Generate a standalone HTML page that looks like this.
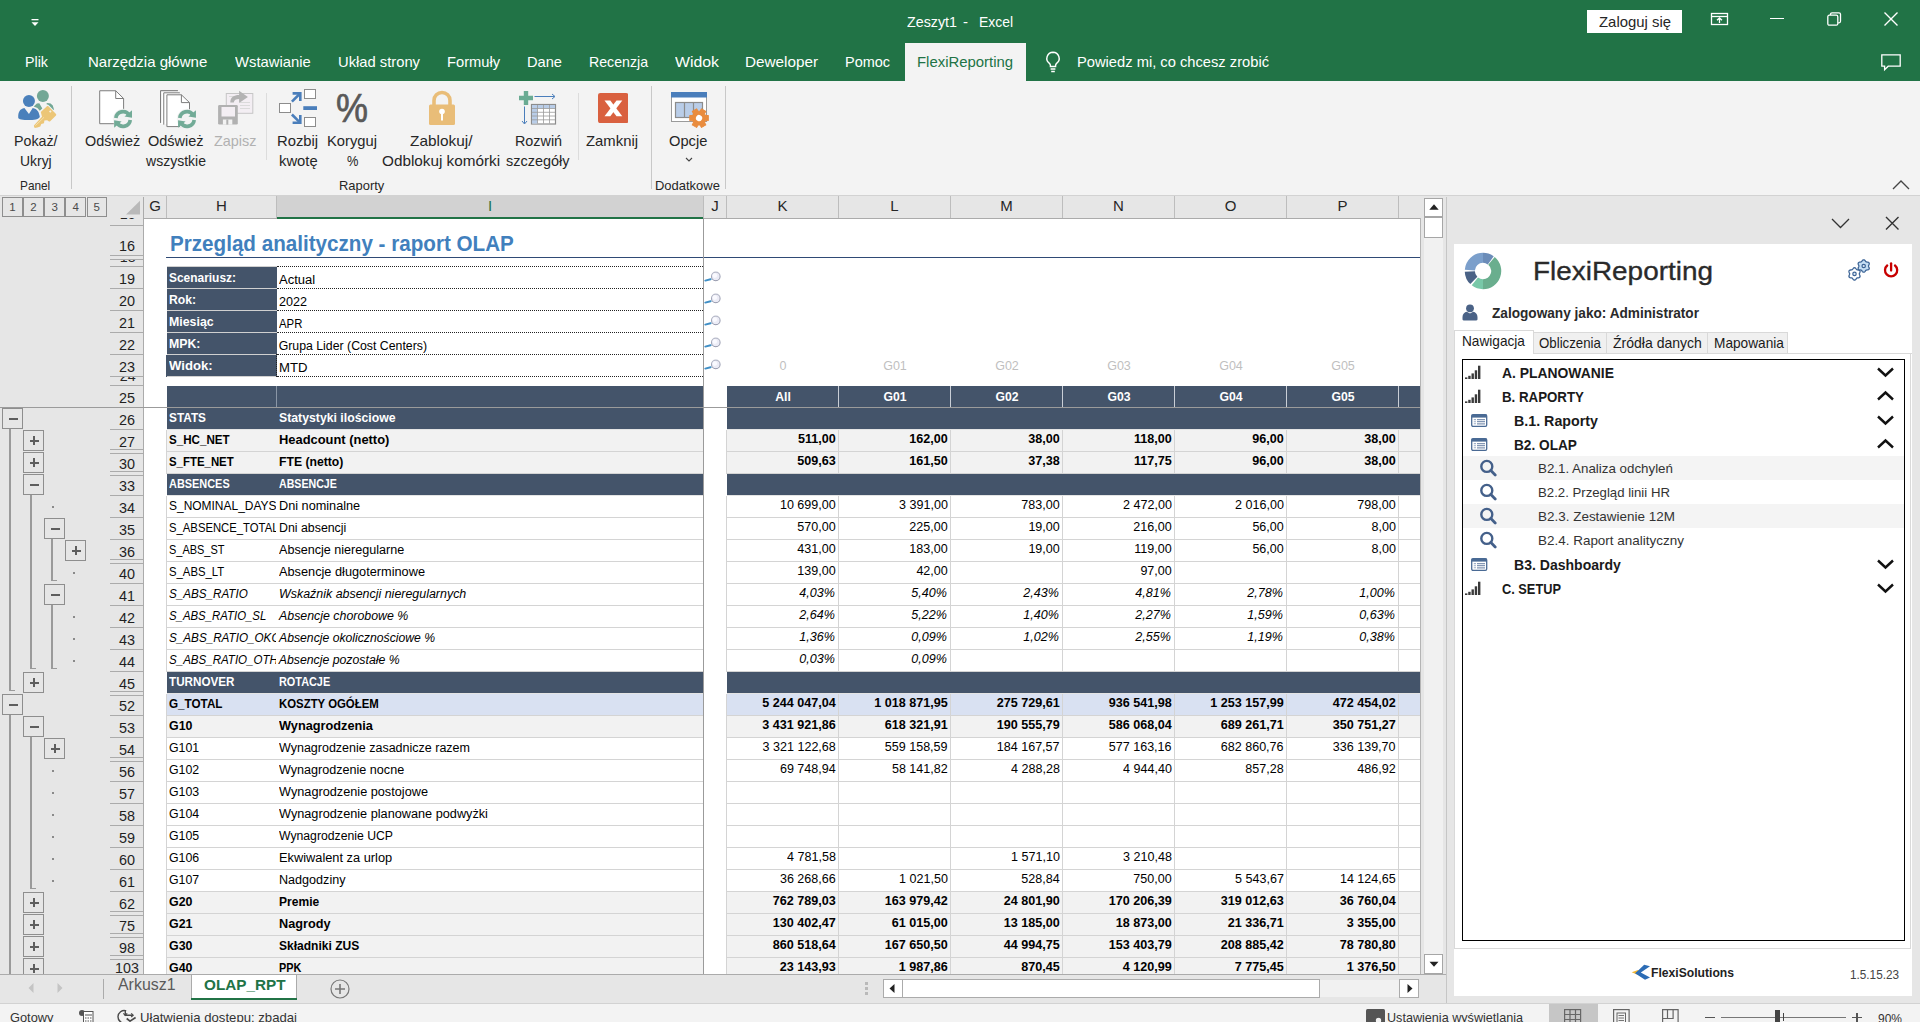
<!DOCTYPE html>
<html><head><meta charset="utf-8"><title>Zeszyt1 - Excel</title>
<style>
html,body{margin:0;padding:0;}
body{width:1920px;height:1022px;overflow:hidden;position:relative;background:#e6e6e6;font-family:"Liberation Sans",sans-serif;}
span{display:block}
</style></head><body>
<div style="position:absolute;left:0.00px;top:0.00px;width:1920.00px;height:81.00px;background:#217346;"></div>
<div style="position:absolute;left:0.00px;top:81.00px;width:1920.00px;height:114.00px;background:#f3f3f3;"></div>
<div style="position:absolute;left:0.00px;top:195.00px;width:1920.00px;height:1.00px;background:#d2d2d2;"></div>
<div style="position:absolute;left:0.00px;top:196.00px;width:1920.00px;height:826.00px;background:#e6e6e6;"></div>
<svg style="position:absolute;left:30.30px;top:17.60px" width="10" height="10" viewBox="0 0 10 10"><rect x="1.5" y="1" width="7" height="1.3" fill="#fff"/><path d="M1.5 4.2h7L5 8z" fill="#fff"/></svg>
<span style="position:absolute;top:12.30px;line-height:19px;font-size:15.00px;font-weight:normal;font-style:normal;color:#fff;white-space:pre;left:907.00px;transform-origin:0 50%;transform:scaleX(0.9521);">Zeszyt1</span>
<span style="position:absolute;top:12.30px;line-height:19px;font-size:15.00px;font-weight:normal;font-style:normal;color:#fff;white-space:pre;left:963.00px;transform-origin:0 50%;">-</span>
<span style="position:absolute;top:12.30px;line-height:19px;font-size:15.00px;font-weight:normal;font-style:normal;color:#fff;white-space:pre;left:979.00px;transform-origin:0 50%;transform:scaleX(0.9269);">Excel</span>
<div style="position:absolute;left:1587.00px;top:10.00px;width:95.00px;height:23.00px;background:#fff;"></div>
<span style="position:absolute;top:12.30px;line-height:19px;font-size:15.00px;font-weight:normal;font-style:normal;color:#262626;white-space:pre;left:1598.50px;transform-origin:0 50%;transform:scaleX(0.9926);">Zaloguj się</span>
<svg style="position:absolute;left:1710.00px;top:12.00px" width="20" height="14" viewBox="0 0 20 14"><rect x="1.5" y="1.5" width="16" height="11" fill="none" stroke="#fff" stroke-width="1.3"/><path d="M1.5 4.5h16" stroke="#fff" stroke-width="1.3"/><path d="M9.5 11V6.3M7 8.3l2.5-2.3 2.5 2.3" stroke="#fff" stroke-width="1.3" fill="none"/></svg>
<div style="position:absolute;left:1770.00px;top:18.00px;width:14.00px;height:1.30px;background:#fff;"></div>
<svg style="position:absolute;left:1826.00px;top:11.00px" width="16" height="16" viewBox="0 0 16 16"><rect x="1.8" y="4.2" width="10" height="10" rx="1.5" fill="none" stroke="#fff" stroke-width="1.3"/><path d="M4.5 4V3.3a1.5 1.5 0 0 1 1.5-1.5h7a1.5 1.5 0 0 1 1.5 1.5v7a1.5 1.5 0 0 1-1.5 1.5h-.9" fill="none" stroke="#fff" stroke-width="1.3"/></svg>
<svg style="position:absolute;left:1883.00px;top:11.00px" width="16" height="16" viewBox="0 0 16 16"><path d="M1.5 1.5l13 13M14.5 1.5l-13 13" stroke="#fff" stroke-width="1.4"/></svg>
<span style="position:absolute;top:52.30px;line-height:19px;font-size:15.00px;font-weight:normal;font-style:normal;color:#fff;white-space:pre;left:25.00px;transform-origin:0 50%;transform:scaleX(0.9516);">Plik</span>
<span style="position:absolute;top:52.30px;line-height:19px;font-size:15.00px;font-weight:normal;font-style:normal;color:#fff;white-space:pre;left:88.00px;transform-origin:0 50%;">Narzędzia główne</span>
<span style="position:absolute;top:52.30px;line-height:19px;font-size:15.00px;font-weight:normal;font-style:normal;color:#fff;white-space:pre;left:235.00px;transform-origin:0 50%;transform:scaleX(0.9871);">Wstawianie</span>
<span style="position:absolute;top:52.30px;line-height:19px;font-size:15.00px;font-weight:normal;font-style:normal;color:#fff;white-space:pre;left:338.00px;transform-origin:0 50%;transform:scaleX(0.9836);">Układ strony</span>
<span style="position:absolute;top:52.30px;line-height:19px;font-size:15.00px;font-weight:normal;font-style:normal;color:#fff;white-space:pre;left:447.00px;transform-origin:0 50%;transform:scaleX(0.9784);">Formuły</span>
<span style="position:absolute;top:52.30px;line-height:19px;font-size:15.00px;font-weight:normal;font-style:normal;color:#fff;white-space:pre;left:527.00px;transform-origin:0 50%;transform:scaleX(0.9760);">Dane</span>
<span style="position:absolute;top:52.30px;line-height:19px;font-size:15.00px;font-weight:normal;font-style:normal;color:#fff;white-space:pre;left:589.00px;transform-origin:0 50%;transform:scaleX(0.9435);">Recenzja</span>
<span style="position:absolute;top:52.30px;line-height:19px;font-size:15.00px;font-weight:normal;font-style:normal;color:#fff;white-space:pre;left:675.00px;transform-origin:0 50%;transform:scaleX(1.0558);">Widok</span>
<span style="position:absolute;top:52.30px;line-height:19px;font-size:15.00px;font-weight:normal;font-style:normal;color:#fff;white-space:pre;left:745.00px;transform-origin:0 50%;transform:scaleX(1.0181);">Deweloper</span>
<span style="position:absolute;top:52.30px;line-height:19px;font-size:15.00px;font-weight:normal;font-style:normal;color:#fff;white-space:pre;left:845.00px;transform-origin:0 50%;transform:scaleX(0.9639);">Pomoc</span>
<div style="position:absolute;left:905.00px;top:43.00px;width:121.00px;height:38.00px;background:#f3f3f3;"></div>
<span style="position:absolute;top:52.30px;line-height:19px;font-size:15.00px;font-weight:normal;font-style:normal;color:#217346;white-space:pre;left:917.00px;transform-origin:0 50%;transform:scaleX(0.9927);">FlexiReporting</span>
<svg style="position:absolute;left:1043.00px;top:50.00px" width="20" height="24" viewBox="0 0 20 24"><path d="M10 2.2a6.2 6.2 0 0 0-3.6 11.2c.7.6 1 1.3 1 2.1v1h5.2v-1c0-.8.3-1.5 1-2.1A6.2 6.2 0 0 0 10 2.2z" fill="none" stroke="#fff" stroke-width="1.4"/><path d="M7.6 19h4.8M8.2 21.5h3.6" stroke="#fff" stroke-width="1.4"/></svg>
<span style="position:absolute;top:52.30px;line-height:19px;font-size:15.00px;font-weight:normal;font-style:normal;color:#fff;white-space:pre;left:1077.00px;transform-origin:0 50%;transform:scaleX(0.9801);">Powiedz mi, co chcesz zrobić</span>
<svg style="position:absolute;left:1880.00px;top:53.00px" width="22" height="19" viewBox="0 0 22 19"><path d="M1.8 1.8h18.4v11.4H8.2l-3.6 3.6v-3.6H1.8z" fill="none" stroke="#fff" stroke-width="1.3"/></svg>
<div style="position:absolute;left:71.00px;top:86.00px;width:1.00px;height:103.00px;background:#c8c8c8;"></div>
<div style="position:absolute;left:651.00px;top:86.00px;width:1.00px;height:103.00px;background:#c8c8c8;"></div>
<div style="position:absolute;left:725.00px;top:86.00px;width:1.00px;height:103.00px;background:#c8c8c8;"></div>
<div style="position:absolute;left:266.00px;top:93.00px;width:1.00px;height:67.00px;background:#dcdcdc;"></div>
<div style="position:absolute;left:578.00px;top:93.00px;width:1.00px;height:67.00px;background:#dcdcdc;"></div>
<span style="position:absolute;top:131.30px;line-height:19px;font-size:15.00px;font-weight:normal;font-style:normal;color:#262626;white-space:pre;left:14.40px;transform-origin:0 50%;transform:scaleX(0.9486);">Pokaż/</span>
<span style="position:absolute;top:151.00px;line-height:19px;font-size:15.00px;font-weight:normal;font-style:normal;color:#262626;white-space:pre;left:19.60px;transform-origin:0 50%;transform:scaleX(0.9280);">Ukryj</span>
<span style="position:absolute;top:177.22px;line-height:17px;font-size:13.50px;font-weight:normal;font-style:normal;color:#262626;white-space:pre;left:19.60px;transform-origin:0 50%;transform:scaleX(0.8746);">Panel</span>
<span style="position:absolute;top:131.30px;line-height:19px;font-size:15.00px;font-weight:normal;font-style:normal;color:#262626;white-space:pre;left:84.50px;transform-origin:0 50%;transform:scaleX(0.9597);">Odśwież</span>
<span style="position:absolute;top:131.30px;line-height:19px;font-size:15.00px;font-weight:normal;font-style:normal;color:#262626;white-space:pre;left:148.40px;transform-origin:0 50%;transform:scaleX(0.9667);">Odśwież</span>
<span style="position:absolute;top:151.00px;line-height:19px;font-size:15.00px;font-weight:normal;font-style:normal;color:#262626;white-space:pre;left:145.50px;transform-origin:0 50%;transform:scaleX(0.9349);">wszystkie</span>
<span style="position:absolute;top:131.30px;line-height:19px;font-size:15.00px;font-weight:normal;font-style:normal;color:#b1b1b1;white-space:pre;left:213.50px;transform-origin:0 50%;transform:scaleX(0.9620);">Zapisz</span>
<span style="position:absolute;top:131.30px;line-height:19px;font-size:15.00px;font-weight:normal;font-style:normal;color:#262626;white-space:pre;left:277.30px;transform-origin:0 50%;transform:scaleX(0.9860);">Rozbij</span>
<span style="position:absolute;top:151.00px;line-height:19px;font-size:15.00px;font-weight:normal;font-style:normal;color:#262626;white-space:pre;left:278.70px;transform-origin:0 50%;transform:scaleX(0.9876);">kwotę</span>
<span style="position:absolute;top:131.30px;line-height:19px;font-size:15.00px;font-weight:normal;font-style:normal;color:#262626;white-space:pre;left:326.60px;transform-origin:0 50%;transform:scaleX(0.9811);">Koryguj</span>
<span style="position:absolute;top:151.00px;line-height:19px;font-size:15.00px;font-weight:normal;font-style:normal;color:#262626;white-space:pre;left:346.60px;transform-origin:0 50%;transform:scaleX(0.8547);">%</span>
<span style="position:absolute;top:131.30px;line-height:19px;font-size:15.00px;font-weight:normal;font-style:normal;color:#262626;white-space:pre;left:410.00px;transform-origin:0 50%;transform:scaleX(1.0252);">Zablokuj/</span>
<span style="position:absolute;top:151.00px;line-height:19px;font-size:15.00px;font-weight:normal;font-style:normal;color:#262626;white-space:pre;left:382.30px;transform-origin:0 50%;transform:scaleX(1.0192);">Odblokuj komórki</span>
<span style="position:absolute;top:131.30px;line-height:19px;font-size:15.00px;font-weight:normal;font-style:normal;color:#262626;white-space:pre;left:514.60px;transform-origin:0 50%;transform:scaleX(0.9577);">Rozwiń</span>
<span style="position:absolute;top:151.00px;line-height:19px;font-size:15.00px;font-weight:normal;font-style:normal;color:#262626;white-space:pre;left:506.30px;transform-origin:0 50%;transform:scaleX(0.9627);">szczegóły</span>
<span style="position:absolute;top:131.30px;line-height:19px;font-size:15.00px;font-weight:normal;font-style:normal;color:#262626;white-space:pre;left:586.20px;transform-origin:0 50%;transform:scaleX(0.9903);">Zamknij</span>
<span style="position:absolute;top:131.30px;line-height:19px;font-size:15.00px;font-weight:normal;font-style:normal;color:#262626;white-space:pre;left:669.20px;transform-origin:0 50%;transform:scaleX(0.9774);">Opcje</span>
<span style="position:absolute;top:177.22px;line-height:17px;font-size:13.50px;font-weight:normal;font-style:normal;color:#262626;white-space:pre;left:338.50px;transform-origin:0 50%;transform:scaleX(0.9583);">Raporty</span>
<span style="position:absolute;top:177.22px;line-height:17px;font-size:13.50px;font-weight:normal;font-style:normal;color:#262626;white-space:pre;left:655.40px;transform-origin:0 50%;transform:scaleX(0.9609);">Dodatkowe</span>
<svg style="position:absolute;left:684.00px;top:156.00px" width="10" height="7" viewBox="0 0 10 7"><path d="M2 2l3 3 3-3" fill="none" stroke="#444" stroke-width="1.1"/></svg>
<svg style="position:absolute;left:1891.00px;top:178.00px" width="20" height="13" viewBox="0 0 20 13"><path d="M2 11l8-8 8 8" fill="none" stroke="#444" stroke-width="1.3"/></svg>
<svg style="position:absolute;left:8.00px;top:84.00px" width="60" height="50" viewBox="0 0 60 50">
<circle cx="34.900" cy="11.900" r="6" fill="#72a795"/>
<path d="M25.700 22.600L28.900 19.600L31.300 19.300L34.300 24.500L31.800 26.700L29.400 24Z" fill="#72a795"/>
<path d="M38.200 20.100L39.200 19.100L42.600 19.600L44.800 21.500L46 25.500L45.500 25.900L40.600 21Z" fill="#72a795"/>
<circle cx="20.950" cy="16.900" r="6" fill="#4a80bb"/>
<path d="M10.200 33.500C10.200 28 11.500 25.200 16.400 24L20.950 29.900L24.700 24C29.500 25 31 28 31.800 32.500C31.800 35.500 25 36 20.950 36C15 36 10.200 35.500 10.200 33.500Z" fill="#4a80bb"/>
<path d="M39.200 22Q39.800 21.700 40.400 22.300L48 30Q48.500 30.800 48 31.400L42.200 37.300Q41.600 37.800 41 37.400L39.200 36.200L36.400 36.400L36 39.200L33.300 40.100L32.300 42.600L29.400 43.600L26.800 43.900Q25.900 43.500 25.900 41.600L34 32.800L32.800 28.100Z" fill="#ecc677"/>
<path d="M42.300 26.200l1.300 1.300-1.300 1.300-1.300-1.300z" fill="#f6f0e0"/>
<path d="M27.400 41.600L36 33.300" stroke="#f6e6bd" stroke-width=".8"/>
</svg>
<svg style="position:absolute;left:92.00px;top:84.00px" width="120" height="50" viewBox="0 0 120 50">
<path d="M7.700 6.750H23.700L31.600 14.500V39.700H7.700z" fill="#fff" stroke="#7d7d7d" stroke-width="1"/>
<path d="M23.700 6.750V14.500H31.600" fill="none" stroke="#7d7d7d" stroke-width="1"/>
<g transform="translate(31.06 35)"><circle r="10.300" fill="#f3f3f3"/>
<path d="M-7.200 -1A7.200 7.200 0 0 1 5.90 -4.13" fill="none" stroke="#72ab97" stroke-width="3.700"/>
<path d="M7.200 1A7.200 7.200 0 0 1 -5.90 4.13" fill="none" stroke="#72ab97" stroke-width="3.700"/>
<path d="M8.940 -8.750V-1.200L1.440 -2.500z" fill="#72ab97"/><path d="M-8.940 8.750V1.200L-1.440 2.500z" fill="#72ab97"/></g>
<path d="M68.600 38.750V6.750H85.900" fill="none" stroke="#7d7d7d" stroke-width="1"/>
<path d="M68.600 6.750H85.900V10H68.600z" fill="#fff" stroke="none"/>
<path d="M69.100 7.250H86.500V40H69.100z" fill="#fff"/>
<path d="M68.600 38.750V6.750H85.900" fill="none" stroke="#7d7d7d" stroke-width="1"/>
<path d="M71.750 40.600V8.800H87.800" fill="none" stroke="#7d7d7d" stroke-width="1"/>
<path d="M74.900 10.800H89.400L97.500 18.600V42.600H74.900z" fill="#fff" stroke="#7d7d7d" stroke-width="1"/>
<path d="M89.400 10.800V18.600H97.500" fill="none" stroke="#7d7d7d" stroke-width="1"/>
<g transform="translate(95 35)"><circle r="10.300" fill="#f3f3f3"/>
<path d="M-7.200 -1A7.200 7.200 0 0 1 5.90 -4.13" fill="none" stroke="#72ab97" stroke-width="3.700"/>
<path d="M7.200 1A7.200 7.200 0 0 1 -5.90 4.13" fill="none" stroke="#72ab97" stroke-width="3.700"/>
<path d="M8.940 -8.750V-1.200L1.440 -2.500z" fill="#72ab97"/><path d="M-8.940 8.750V1.200L-1.440 2.500z" fill="#72ab97"/></g></svg>
<svg style="position:absolute;left:210.00px;top:84.00px" width="50" height="46" viewBox="0 0 50 46"><rect x="16.300" y="9.500" width="26.500" height="19.800" fill="#f3eef3" stroke="#c6c6c6"/>
<path d="M30 18.500h10M30 21.500h10M30 24.500h10M19 12.500h8" stroke="#dadada" stroke-width="1"/>
<path d="M20.300 18.600C20.300 13 24 11 29.100 11V6.800L37.900 12.900L29.100 19V15C26 15 24 16 23.800 18.600z" fill="#b3b3b3"/>
<rect x="8.100" y="21" width="19.700" height="19.600" rx="1.300" fill="#b1b1b1"/><rect x="11.500" y="23" width="13.500" height="9.500" fill="#f3eef3"/>
<rect x="12.900" y="35.500" width="9.400" height="5.100" fill="#f3f3f3"/><rect x="16.300" y="35.500" width="2" height="5.100" fill="#b1b1b1"/></svg>
<svg style="position:absolute;left:277.00px;top:87.00px" width="42" height="42" viewBox="0 0 42 42"><rect x="2.500" y="16.500" width="11" height="9" fill="#fff" stroke="#8c8c8c"/>
<rect x="27.500" y="2.500" width="11" height="9" fill="#fff" stroke="#8c8c8c"/>
<rect x="27.500" y="30.500" width="11" height="9" fill="#fff" stroke="#8c8c8c"/>
<rect x="26.300" y="19.200" width="13.700" height="3.800" fill="#4a7ebb"/>
<path d="M14.900 14.600l7.700-7.600" stroke="#4a7ebb" stroke-width="2.600"/><path d="M15.600 6.400h7.700v7.700" fill="none" stroke="#4a7ebb" stroke-width="2.600"/>
<path d="M14.900 27.500l7.700 7.600" stroke="#4a7ebb" stroke-width="2.600"/><path d="M15.600 35.700h7.700v-7.700" fill="none" stroke="#4a7ebb" stroke-width="2.600"/></svg>
<span style="position:absolute;top:82.74px;line-height:50px;font-size:40.00px;font-weight:normal;font-style:normal;color:#595959;white-space:pre;left:51.70px;width:600px;text-align:center;transform-origin:50% 50%;transform:scaleX(0.8997);-webkit-text-stroke:0.7px #595959;">%</span>
<svg style="position:absolute;left:427.00px;top:89.00px" width="30" height="38" viewBox="0 0 30 38"><path d="M7 17v-5.500a8 8 0 0 1 16 0V17" fill="none" stroke="#e9bd78" stroke-width="3.600"/>
<rect x="2" y="15.500" width="26" height="20.500" rx="1.500" fill="#e9bd78"/>
<circle cx="15" cy="22.500" r="2.800" fill="#fff"/><rect x="14" y="23" width="2" height="8.500" fill="#fff"/></svg>
<svg style="position:absolute;left:517.00px;top:89.00px" width="42" height="38" viewBox="0 0 42 38"><path d="M9 2v14M2 9h14" stroke="#6aab93" stroke-width="4.400"/>
<path d="M17.500 7.500h20" stroke="#4a7ebb" stroke-width="1"/><path d="M35 5l3 2.500-3 2.500" fill="none" stroke="#4a7ebb"/>
<path d="M7.500 17.500v17" stroke="#4a7ebb" stroke-width="1"/><path d="M5 32l2.500 3 2.500-3" fill="none" stroke="#4a7ebb"/>
<rect x="14.500" y="15.500" width="24" height="19.500" fill="#fff" stroke="#8c8c8c" stroke-width="1.200"/>
<rect x="15" y="16" width="23" height="3.400" fill="#b9cde8"/><rect x="15" y="16" width="5.500" height="18.500" fill="#b9cde8"/>
<path d="M20.500 16v18.500M26.500 16v18.500M32.500 16v18.500M15 19.500h23M15 23.300h23M15 27h23M15 30.800h23" stroke="#9a9a9a" stroke-width=".8"/></svg>
<svg style="position:absolute;left:597.80px;top:92.80px" width="30.5" height="30.2" viewBox="0 0 30.5 30.2"><rect x="0" y="0" width="30.500" height="30.200" rx="2.500" fill="#d9603f"/><path d="M6.500 7.400h5.800l12 15.900h-5.800z" fill="#fff"/><path d="M24.300 7.400h-5.800l-12 15.900h5.800z" fill="#fff"/></svg>
<svg style="position:absolute;left:670.00px;top:91.00px" width="41" height="38" viewBox="0 0 41 38"><rect x="1.500" y="1.500" width="35" height="29" fill="#fff" stroke="#9a9a9a" stroke-width="1"/>
<rect x="1" y="1" width="36" height="5.500" fill="#4a7ebb"/>
<rect x="5.500" y="11.500" width="27" height="15" fill="#b9cde8" stroke="#8c8c8c" stroke-width="1.200"/>
<path d="M14.500 11.500v15M23.500 11.500v15" stroke="#8c8c8c" stroke-width="1.200"/>
<g transform="translate(29.05 27.1) rotate(30)"><path d="M-2.58 -6.40L-2.48 -9.27L2.48 -9.27L2.58 -6.40L4.25 -5.44L6.79 -6.79L9.27 -2.48L6.83 -0.96L6.83 0.96L9.27 2.48L6.79 6.79L4.25 5.44L2.58 6.40L2.48 9.27L-2.48 9.27L-2.58 6.40L-4.25 5.44L-6.79 6.79L-9.27 2.48L-6.83 0.96L-6.83 -0.96L-9.27 -2.48L-6.79 -6.79L-4.25 -5.44Z" fill="#e98c3e" stroke="#e98c3e" stroke-width="1" stroke-linejoin="round" style="paint-order:stroke"/><circle r="3.100" fill="#fff"/></g></svg>
<div style="position:absolute;left:144.00px;top:219.00px;width:1277.00px;height:755.00px;background:#fff;"></div>
<div style="position:absolute;left:2.30px;top:196.50px;width:20.40px;height:20.30px;background:#e6e6e6;border:1px solid #8e8e8e;box-sizing:border-box;"></div>
<span style="position:absolute;top:200.02px;line-height:14px;font-size:11.50px;font-weight:normal;font-style:normal;color:#4a4a4a;white-space:pre;left:-287.50px;width:600px;text-align:center;transform-origin:50% 50%;">1</span>
<div style="position:absolute;left:23.35px;top:196.50px;width:20.40px;height:20.30px;background:#e6e6e6;border:1px solid #8e8e8e;box-sizing:border-box;"></div>
<span style="position:absolute;top:200.02px;line-height:14px;font-size:11.50px;font-weight:normal;font-style:normal;color:#4a4a4a;white-space:pre;left:-266.45px;width:600px;text-align:center;transform-origin:50% 50%;">2</span>
<div style="position:absolute;left:44.40px;top:196.50px;width:20.40px;height:20.30px;background:#e6e6e6;border:1px solid #8e8e8e;box-sizing:border-box;"></div>
<span style="position:absolute;top:200.02px;line-height:14px;font-size:11.50px;font-weight:normal;font-style:normal;color:#4a4a4a;white-space:pre;left:-245.40px;width:600px;text-align:center;transform-origin:50% 50%;">3</span>
<div style="position:absolute;left:65.45px;top:196.50px;width:20.40px;height:20.30px;background:#e6e6e6;border:1px solid #8e8e8e;box-sizing:border-box;"></div>
<span style="position:absolute;top:200.02px;line-height:14px;font-size:11.50px;font-weight:normal;font-style:normal;color:#4a4a4a;white-space:pre;left:-224.35px;width:600px;text-align:center;transform-origin:50% 50%;">4</span>
<div style="position:absolute;left:86.50px;top:196.50px;width:20.40px;height:20.30px;background:#e6e6e6;border:1px solid #8e8e8e;box-sizing:border-box;"></div>
<span style="position:absolute;top:200.02px;line-height:14px;font-size:11.50px;font-weight:normal;font-style:normal;color:#4a4a4a;white-space:pre;left:-203.30px;width:600px;text-align:center;transform-origin:50% 50%;">5</span>
<svg style="position:absolute;left:125.00px;top:200.00px" width="16" height="15" viewBox="0 0 16 15"><path d="M15 .8V14.500H1z" fill="#b9b9b9"/></svg>
<div style="position:absolute;left:144.00px;top:218.00px;width:1277.00px;height:1.00px;background:#ababab;"></div>
<div style="position:absolute;left:166.00px;top:196.00px;width:1.00px;height:22.00px;background:#bdbdbd;"></div>
<span style="position:absolute;top:196.10px;line-height:19px;font-size:15.00px;font-weight:normal;font-style:normal;color:#262626;white-space:pre;left:-145.00px;width:600px;text-align:center;transform-origin:50% 50%;">G</span>
<div style="position:absolute;left:276.00px;top:196.00px;width:1.00px;height:22.00px;background:#bdbdbd;"></div>
<span style="position:absolute;top:196.10px;line-height:19px;font-size:15.00px;font-weight:normal;font-style:normal;color:#262626;white-space:pre;left:-78.50px;width:600px;text-align:center;transform-origin:50% 50%;">H</span>
<div style="position:absolute;left:277.00px;top:196.00px;width:426.00px;height:21.00px;background:#d2d2d2;"></div>
<div style="position:absolute;left:277.00px;top:217.00px;width:426.00px;height:2.00px;background:#217346;"></div>
<div style="position:absolute;left:703.00px;top:196.00px;width:1.00px;height:22.00px;background:#bdbdbd;"></div>
<span style="position:absolute;top:196.10px;line-height:19px;font-size:15.00px;font-weight:normal;font-style:normal;color:#217346;white-space:pre;left:190.00px;width:600px;text-align:center;transform-origin:50% 50%;">I</span>
<div style="position:absolute;left:726.00px;top:196.00px;width:1.00px;height:22.00px;background:#bdbdbd;"></div>
<span style="position:absolute;top:196.10px;line-height:19px;font-size:15.00px;font-weight:normal;font-style:normal;color:#262626;white-space:pre;left:415.00px;width:600px;text-align:center;transform-origin:50% 50%;">J</span>
<div style="position:absolute;left:838.00px;top:196.00px;width:1.00px;height:22.00px;background:#bdbdbd;"></div>
<span style="position:absolute;top:196.10px;line-height:19px;font-size:15.00px;font-weight:normal;font-style:normal;color:#262626;white-space:pre;left:482.50px;width:600px;text-align:center;transform-origin:50% 50%;">K</span>
<div style="position:absolute;left:950.00px;top:196.00px;width:1.00px;height:22.00px;background:#bdbdbd;"></div>
<span style="position:absolute;top:196.10px;line-height:19px;font-size:15.00px;font-weight:normal;font-style:normal;color:#262626;white-space:pre;left:594.50px;width:600px;text-align:center;transform-origin:50% 50%;">L</span>
<div style="position:absolute;left:1062.00px;top:196.00px;width:1.00px;height:22.00px;background:#bdbdbd;"></div>
<span style="position:absolute;top:196.10px;line-height:19px;font-size:15.00px;font-weight:normal;font-style:normal;color:#262626;white-space:pre;left:706.50px;width:600px;text-align:center;transform-origin:50% 50%;">M</span>
<div style="position:absolute;left:1174.00px;top:196.00px;width:1.00px;height:22.00px;background:#bdbdbd;"></div>
<span style="position:absolute;top:196.10px;line-height:19px;font-size:15.00px;font-weight:normal;font-style:normal;color:#262626;white-space:pre;left:818.50px;width:600px;text-align:center;transform-origin:50% 50%;">N</span>
<div style="position:absolute;left:1286.00px;top:196.00px;width:1.00px;height:22.00px;background:#bdbdbd;"></div>
<span style="position:absolute;top:196.10px;line-height:19px;font-size:15.00px;font-weight:normal;font-style:normal;color:#262626;white-space:pre;left:930.50px;width:600px;text-align:center;transform-origin:50% 50%;">O</span>
<div style="position:absolute;left:1398.00px;top:196.00px;width:1.00px;height:22.00px;background:#bdbdbd;"></div>
<span style="position:absolute;top:196.10px;line-height:19px;font-size:15.00px;font-weight:normal;font-style:normal;color:#262626;white-space:pre;left:1042.50px;width:600px;text-align:center;transform-origin:50% 50%;">P</span>
<div style="position:absolute;left:143.00px;top:197.00px;width:1.00px;height:777.00px;background:#ababab;"></div>
<div style="position:absolute;left:110.00px;top:225.00px;width:33.00px;height:1.00px;background:#ababab;"></div>
<div style="position:absolute;left:110.00px;top:255.00px;width:33.00px;height:1.00px;background:#ababab;"></div>
<div style="position:absolute;left:110.00px;top:259.00px;width:33.00px;height:1.00px;background:#ababab;"></div>
<div style="position:absolute;left:110.00px;top:266.00px;width:33.00px;height:1.00px;background:#ababab;"></div>
<div style="position:absolute;left:110.00px;top:376.00px;width:33.00px;height:1.00px;background:#ababab;"></div>
<div style="position:absolute;left:110.00px;top:385.00px;width:33.00px;height:1.00px;background:#ababab;"></div>
<span style="position:absolute;top:236.23px;line-height:19px;font-size:15.20px;font-weight:normal;font-style:normal;color:#1f1f1f;white-space:pre;left:-173.10px;width:600px;text-align:center;transform-origin:50% 50%;transform:scaleX(0.9474);">16</span>
<div style="position:absolute;left:110px;top:218px;width:33px;height:7px;overflow:hidden"><span style="position:absolute;right:7px;top:-14.5px;font-size:15px;line-height:19px;color:#262626;transform:scaleX(.95);transform-origin:100% 50%">15</span></div>
<div style="position:absolute;left:110px;top:260px;width:33px;height:6px;overflow:hidden"><span style="position:absolute;right:7px;top:-13.3px;font-size:15px;line-height:19px;color:#262626;transform:scaleX(.95);transform-origin:100% 50%">18</span></div>
<div style="position:absolute;left:110px;top:377px;width:33px;height:8px;overflow:hidden"><span style="position:absolute;right:7px;top:-11.3px;font-size:15px;line-height:19px;color:#262626;transform:scaleX(.95);transform-origin:100% 50%">24</span></div>
<div style="position:absolute;left:110.00px;top:288.00px;width:33.00px;height:1.00px;background:#ababab;"></div>
<span style="position:absolute;top:269.03px;line-height:19px;font-size:15.20px;font-weight:normal;font-style:normal;color:#1f1f1f;white-space:pre;left:-173.10px;width:600px;text-align:center;transform-origin:50% 50%;transform:scaleX(0.9474);">19</span>
<div style="position:absolute;left:110.00px;top:310.00px;width:33.00px;height:1.00px;background:#ababab;"></div>
<span style="position:absolute;top:291.03px;line-height:19px;font-size:15.20px;font-weight:normal;font-style:normal;color:#1f1f1f;white-space:pre;left:-173.10px;width:600px;text-align:center;transform-origin:50% 50%;transform:scaleX(0.9474);">20</span>
<div style="position:absolute;left:110.00px;top:332.00px;width:33.00px;height:1.00px;background:#ababab;"></div>
<span style="position:absolute;top:313.03px;line-height:19px;font-size:15.20px;font-weight:normal;font-style:normal;color:#1f1f1f;white-space:pre;left:-173.10px;width:600px;text-align:center;transform-origin:50% 50%;transform:scaleX(0.9474);">21</span>
<div style="position:absolute;left:110.00px;top:354.00px;width:33.00px;height:1.00px;background:#ababab;"></div>
<span style="position:absolute;top:335.03px;line-height:19px;font-size:15.20px;font-weight:normal;font-style:normal;color:#1f1f1f;white-space:pre;left:-173.10px;width:600px;text-align:center;transform-origin:50% 50%;transform:scaleX(0.9474);">22</span>
<div style="position:absolute;left:110.00px;top:376.00px;width:33.00px;height:1.00px;background:#ababab;"></div>
<span style="position:absolute;top:357.03px;line-height:19px;font-size:15.20px;font-weight:normal;font-style:normal;color:#1f1f1f;white-space:pre;left:-173.10px;width:600px;text-align:center;transform-origin:50% 50%;transform:scaleX(0.9474);">23</span>
<div style="position:absolute;left:110.00px;top:407.00px;width:33.00px;height:1.00px;background:#ababab;"></div>
<span style="position:absolute;top:388.03px;line-height:19px;font-size:15.20px;font-weight:normal;font-style:normal;color:#1f1f1f;white-space:pre;left:-173.10px;width:600px;text-align:center;transform-origin:50% 50%;transform:scaleX(0.9474);">25</span>
<div style="position:absolute;left:110.00px;top:429.00px;width:33.00px;height:1.00px;background:#ababab;"></div>
<span style="position:absolute;top:410.03px;line-height:19px;font-size:15.20px;font-weight:normal;font-style:normal;color:#1f1f1f;white-space:pre;left:-173.10px;width:600px;text-align:center;transform-origin:50% 50%;transform:scaleX(0.9474);">26</span>
<div style="position:absolute;left:110.00px;top:449.00px;width:33.00px;height:1.00px;background:#ababab;"></div>
<div style="position:absolute;left:110.00px;top:453.00px;width:33.00px;height:1.00px;background:#ababab;"></div>
<span style="position:absolute;top:432.03px;line-height:19px;font-size:15.20px;font-weight:normal;font-style:normal;color:#1f1f1f;white-space:pre;left:-173.10px;width:600px;text-align:center;transform-origin:50% 50%;transform:scaleX(0.9474);">27</span>
<div style="position:absolute;left:110.00px;top:471.00px;width:33.00px;height:1.00px;background:#ababab;"></div>
<div style="position:absolute;left:110.00px;top:475.00px;width:33.00px;height:1.00px;background:#ababab;"></div>
<span style="position:absolute;top:454.03px;line-height:19px;font-size:15.20px;font-weight:normal;font-style:normal;color:#1f1f1f;white-space:pre;left:-173.10px;width:600px;text-align:center;transform-origin:50% 50%;transform:scaleX(0.9474);">30</span>
<div style="position:absolute;left:110.00px;top:495.00px;width:33.00px;height:1.00px;background:#ababab;"></div>
<span style="position:absolute;top:476.03px;line-height:19px;font-size:15.20px;font-weight:normal;font-style:normal;color:#1f1f1f;white-space:pre;left:-173.10px;width:600px;text-align:center;transform-origin:50% 50%;transform:scaleX(0.9474);">33</span>
<div style="position:absolute;left:110.00px;top:517.00px;width:33.00px;height:1.00px;background:#ababab;"></div>
<span style="position:absolute;top:498.03px;line-height:19px;font-size:15.20px;font-weight:normal;font-style:normal;color:#1f1f1f;white-space:pre;left:-173.10px;width:600px;text-align:center;transform-origin:50% 50%;transform:scaleX(0.9474);">34</span>
<div style="position:absolute;left:110.00px;top:539.00px;width:33.00px;height:1.00px;background:#ababab;"></div>
<span style="position:absolute;top:520.03px;line-height:19px;font-size:15.20px;font-weight:normal;font-style:normal;color:#1f1f1f;white-space:pre;left:-173.10px;width:600px;text-align:center;transform-origin:50% 50%;transform:scaleX(0.9474);">35</span>
<div style="position:absolute;left:110.00px;top:559.00px;width:33.00px;height:1.00px;background:#ababab;"></div>
<div style="position:absolute;left:110.00px;top:563.00px;width:33.00px;height:1.00px;background:#ababab;"></div>
<span style="position:absolute;top:542.03px;line-height:19px;font-size:15.20px;font-weight:normal;font-style:normal;color:#1f1f1f;white-space:pre;left:-173.10px;width:600px;text-align:center;transform-origin:50% 50%;transform:scaleX(0.9474);">36</span>
<div style="position:absolute;left:110.00px;top:583.00px;width:33.00px;height:1.00px;background:#ababab;"></div>
<span style="position:absolute;top:564.03px;line-height:19px;font-size:15.20px;font-weight:normal;font-style:normal;color:#1f1f1f;white-space:pre;left:-173.10px;width:600px;text-align:center;transform-origin:50% 50%;transform:scaleX(0.9474);">40</span>
<div style="position:absolute;left:110.00px;top:605.00px;width:33.00px;height:1.00px;background:#ababab;"></div>
<span style="position:absolute;top:586.03px;line-height:19px;font-size:15.20px;font-weight:normal;font-style:normal;color:#1f1f1f;white-space:pre;left:-173.10px;width:600px;text-align:center;transform-origin:50% 50%;transform:scaleX(0.9474);">41</span>
<div style="position:absolute;left:110.00px;top:627.00px;width:33.00px;height:1.00px;background:#ababab;"></div>
<span style="position:absolute;top:608.03px;line-height:19px;font-size:15.20px;font-weight:normal;font-style:normal;color:#1f1f1f;white-space:pre;left:-173.10px;width:600px;text-align:center;transform-origin:50% 50%;transform:scaleX(0.9474);">42</span>
<div style="position:absolute;left:110.00px;top:649.00px;width:33.00px;height:1.00px;background:#ababab;"></div>
<span style="position:absolute;top:630.03px;line-height:19px;font-size:15.20px;font-weight:normal;font-style:normal;color:#1f1f1f;white-space:pre;left:-173.10px;width:600px;text-align:center;transform-origin:50% 50%;transform:scaleX(0.9474);">43</span>
<div style="position:absolute;left:110.00px;top:671.00px;width:33.00px;height:1.00px;background:#ababab;"></div>
<span style="position:absolute;top:652.03px;line-height:19px;font-size:15.20px;font-weight:normal;font-style:normal;color:#1f1f1f;white-space:pre;left:-173.10px;width:600px;text-align:center;transform-origin:50% 50%;transform:scaleX(0.9474);">44</span>
<div style="position:absolute;left:110.00px;top:691.00px;width:33.00px;height:1.00px;background:#ababab;"></div>
<div style="position:absolute;left:110.00px;top:695.00px;width:33.00px;height:1.00px;background:#ababab;"></div>
<span style="position:absolute;top:674.03px;line-height:19px;font-size:15.20px;font-weight:normal;font-style:normal;color:#1f1f1f;white-space:pre;left:-173.10px;width:600px;text-align:center;transform-origin:50% 50%;transform:scaleX(0.9474);">45</span>
<div style="position:absolute;left:110.00px;top:715.00px;width:33.00px;height:1.00px;background:#ababab;"></div>
<span style="position:absolute;top:696.03px;line-height:19px;font-size:15.20px;font-weight:normal;font-style:normal;color:#1f1f1f;white-space:pre;left:-173.10px;width:600px;text-align:center;transform-origin:50% 50%;transform:scaleX(0.9474);">52</span>
<div style="position:absolute;left:110.00px;top:737.00px;width:33.00px;height:1.00px;background:#ababab;"></div>
<span style="position:absolute;top:718.03px;line-height:19px;font-size:15.20px;font-weight:normal;font-style:normal;color:#1f1f1f;white-space:pre;left:-173.10px;width:600px;text-align:center;transform-origin:50% 50%;transform:scaleX(0.9474);">53</span>
<div style="position:absolute;left:110.00px;top:757.00px;width:33.00px;height:1.00px;background:#ababab;"></div>
<div style="position:absolute;left:110.00px;top:761.00px;width:33.00px;height:1.00px;background:#ababab;"></div>
<span style="position:absolute;top:740.03px;line-height:19px;font-size:15.20px;font-weight:normal;font-style:normal;color:#1f1f1f;white-space:pre;left:-173.10px;width:600px;text-align:center;transform-origin:50% 50%;transform:scaleX(0.9474);">54</span>
<div style="position:absolute;left:110.00px;top:781.00px;width:33.00px;height:1.00px;background:#ababab;"></div>
<span style="position:absolute;top:762.03px;line-height:19px;font-size:15.20px;font-weight:normal;font-style:normal;color:#1f1f1f;white-space:pre;left:-173.10px;width:600px;text-align:center;transform-origin:50% 50%;transform:scaleX(0.9474);">56</span>
<div style="position:absolute;left:110.00px;top:803.00px;width:33.00px;height:1.00px;background:#ababab;"></div>
<span style="position:absolute;top:784.03px;line-height:19px;font-size:15.20px;font-weight:normal;font-style:normal;color:#1f1f1f;white-space:pre;left:-173.10px;width:600px;text-align:center;transform-origin:50% 50%;transform:scaleX(0.9474);">57</span>
<div style="position:absolute;left:110.00px;top:825.00px;width:33.00px;height:1.00px;background:#ababab;"></div>
<span style="position:absolute;top:806.03px;line-height:19px;font-size:15.20px;font-weight:normal;font-style:normal;color:#1f1f1f;white-space:pre;left:-173.10px;width:600px;text-align:center;transform-origin:50% 50%;transform:scaleX(0.9474);">58</span>
<div style="position:absolute;left:110.00px;top:847.00px;width:33.00px;height:1.00px;background:#ababab;"></div>
<span style="position:absolute;top:828.03px;line-height:19px;font-size:15.20px;font-weight:normal;font-style:normal;color:#1f1f1f;white-space:pre;left:-173.10px;width:600px;text-align:center;transform-origin:50% 50%;transform:scaleX(0.9474);">59</span>
<div style="position:absolute;left:110.00px;top:869.00px;width:33.00px;height:1.00px;background:#ababab;"></div>
<span style="position:absolute;top:850.03px;line-height:19px;font-size:15.20px;font-weight:normal;font-style:normal;color:#1f1f1f;white-space:pre;left:-173.10px;width:600px;text-align:center;transform-origin:50% 50%;transform:scaleX(0.9474);">60</span>
<div style="position:absolute;left:110.00px;top:891.00px;width:33.00px;height:1.00px;background:#ababab;"></div>
<span style="position:absolute;top:872.03px;line-height:19px;font-size:15.20px;font-weight:normal;font-style:normal;color:#1f1f1f;white-space:pre;left:-173.10px;width:600px;text-align:center;transform-origin:50% 50%;transform:scaleX(0.9474);">61</span>
<div style="position:absolute;left:110.00px;top:911.00px;width:33.00px;height:1.00px;background:#ababab;"></div>
<div style="position:absolute;left:110.00px;top:915.00px;width:33.00px;height:1.00px;background:#ababab;"></div>
<span style="position:absolute;top:894.03px;line-height:19px;font-size:15.20px;font-weight:normal;font-style:normal;color:#1f1f1f;white-space:pre;left:-173.10px;width:600px;text-align:center;transform-origin:50% 50%;transform:scaleX(0.9474);">62</span>
<div style="position:absolute;left:110.00px;top:933.00px;width:33.00px;height:1.00px;background:#ababab;"></div>
<div style="position:absolute;left:110.00px;top:937.00px;width:33.00px;height:1.00px;background:#ababab;"></div>
<span style="position:absolute;top:916.03px;line-height:19px;font-size:15.20px;font-weight:normal;font-style:normal;color:#1f1f1f;white-space:pre;left:-173.10px;width:600px;text-align:center;transform-origin:50% 50%;transform:scaleX(0.9474);">75</span>
<div style="position:absolute;left:110.00px;top:955.00px;width:33.00px;height:1.00px;background:#ababab;"></div>
<div style="position:absolute;left:110.00px;top:959.00px;width:33.00px;height:1.00px;background:#ababab;"></div>
<span style="position:absolute;top:938.03px;line-height:19px;font-size:15.20px;font-weight:normal;font-style:normal;color:#1f1f1f;white-space:pre;left:-173.10px;width:600px;text-align:center;transform-origin:50% 50%;transform:scaleX(0.9474);">98</span>
<div style="position:absolute;left:110px;top:958px;width:33px;height:16px;overflow:hidden"><span style="position:absolute;left:-133.5px;width:300px;text-align:center;top:0.2px;font-size:15px;line-height:19px;color:#262626;transform:scaleX(.95);transform-origin:50% 50%">103</span></div>
<span style="position:absolute;top:230.75px;line-height:26px;font-size:21.20px;font-weight:bold;font-style:normal;color:#4180bd;white-space:pre;left:169.80px;transform-origin:0 50%;transform:scaleX(0.9734);">Przegląd analityczny - raport OLAP</span>
<div style="position:absolute;left:166.00px;top:257.00px;width:1255.00px;height:1.40px;background:#2f4a75;"></div>
<div style="position:absolute;left:166.00px;top:355.00px;width:111.00px;height:22.00px;background:#44546a;"></div>
<div style="position:absolute;left:167.00px;top:267.00px;width:110.00px;height:21.00px;background:#44546a;"></div>
<div style="position:absolute;left:167.00px;top:288.00px;width:110.00px;height:1.00px;background:#d0d0d0;"></div>
<span style="position:absolute;top:269.63px;line-height:16px;font-size:12.60px;font-weight:bold;font-style:normal;color:#fff;white-space:pre;left:168.70px;transform-origin:0 50%;transform:scaleX(0.9473);">Scenariusz:</span>
<span style="position:absolute;top:273.04px;line-height:15px;font-size:12.30px;font-weight:normal;font-style:normal;color:#000;white-space:pre;left:278.70px;transform-origin:0 50%;transform:scaleX(1.0589);">Actual</span>
<div style="position:absolute;left:277px;top:266px;width:426px;height:0;border-top:1px dotted #222"></div>
<svg style="position:absolute;left:704.00px;top:269.00px" width="18" height="16" viewBox="0 0 18 16"><defs><linearGradient id="mg0" x1="0" y1="0" x2="0" y2="1"><stop offset="0" stop-color="#b9bccb"/><stop offset="1" stop-color="#8e92a6"/></linearGradient></defs><circle cx="11.800" cy="7.400" r="4.300" fill="#ececf6" stroke="url(#mg0)" stroke-width="1.100"/><circle cx="10.800" cy="6.600" r="2.300" fill="#fafaff"/><path d="M1.300 11.600l5.300-1.400" stroke="#3f8fc6" stroke-width="2" stroke-linecap="round"/></svg>
<div style="position:absolute;left:167.00px;top:289.00px;width:110.00px;height:21.00px;background:#44546a;"></div>
<div style="position:absolute;left:167.00px;top:310.00px;width:110.00px;height:1.00px;background:#d0d0d0;"></div>
<span style="position:absolute;top:291.63px;line-height:16px;font-size:12.60px;font-weight:bold;font-style:normal;color:#fff;white-space:pre;left:168.70px;transform-origin:0 50%;transform:scaleX(0.9679);">Rok:</span>
<span style="position:absolute;top:295.04px;line-height:15px;font-size:12.30px;font-weight:normal;font-style:normal;color:#000;white-space:pre;left:278.70px;transform-origin:0 50%;transform:scaleX(1.0233);">2022</span>
<div style="position:absolute;left:277px;top:288px;width:426px;height:0;border-top:1px dotted #222"></div>
<svg style="position:absolute;left:704.00px;top:291.00px" width="18" height="16" viewBox="0 0 18 16"><defs><linearGradient id="mg1" x1="0" y1="0" x2="0" y2="1"><stop offset="0" stop-color="#b9bccb"/><stop offset="1" stop-color="#8e92a6"/></linearGradient></defs><circle cx="11.800" cy="7.400" r="4.300" fill="#ececf6" stroke="url(#mg1)" stroke-width="1.100"/><circle cx="10.800" cy="6.600" r="2.300" fill="#fafaff"/><path d="M1.300 11.600l5.300-1.400" stroke="#3f8fc6" stroke-width="2" stroke-linecap="round"/></svg>
<div style="position:absolute;left:167.00px;top:311.00px;width:110.00px;height:21.00px;background:#44546a;"></div>
<div style="position:absolute;left:167.00px;top:332.00px;width:110.00px;height:1.00px;background:#d0d0d0;"></div>
<span style="position:absolute;top:313.63px;line-height:16px;font-size:12.60px;font-weight:bold;font-style:normal;color:#fff;white-space:pre;left:168.70px;transform-origin:0 50%;transform:scaleX(0.9818);">Miesiąc</span>
<span style="position:absolute;top:317.04px;line-height:15px;font-size:12.30px;font-weight:normal;font-style:normal;color:#000;white-space:pre;left:278.70px;transform-origin:0 50%;transform:scaleX(0.9252);">APR</span>
<div style="position:absolute;left:277px;top:310px;width:426px;height:0;border-top:1px dotted #222"></div>
<svg style="position:absolute;left:704.00px;top:313.00px" width="18" height="16" viewBox="0 0 18 16"><defs><linearGradient id="mg2" x1="0" y1="0" x2="0" y2="1"><stop offset="0" stop-color="#b9bccb"/><stop offset="1" stop-color="#8e92a6"/></linearGradient></defs><circle cx="11.800" cy="7.400" r="4.300" fill="#ececf6" stroke="url(#mg2)" stroke-width="1.100"/><circle cx="10.800" cy="6.600" r="2.300" fill="#fafaff"/><path d="M1.300 11.600l5.300-1.400" stroke="#3f8fc6" stroke-width="2" stroke-linecap="round"/></svg>
<div style="position:absolute;left:167.00px;top:333.00px;width:110.00px;height:21.00px;background:#44546a;"></div>
<div style="position:absolute;left:167.00px;top:354.00px;width:110.00px;height:1.00px;background:#d0d0d0;"></div>
<span style="position:absolute;top:335.63px;line-height:16px;font-size:12.60px;font-weight:bold;font-style:normal;color:#fff;white-space:pre;left:168.70px;transform-origin:0 50%;transform:scaleX(0.9753);">MPK:</span>
<span style="position:absolute;top:339.04px;line-height:15px;font-size:12.30px;font-weight:normal;font-style:normal;color:#000;white-space:pre;left:278.70px;transform-origin:0 50%;">Grupa Lider (Cost Centers)</span>
<div style="position:absolute;left:277px;top:332px;width:426px;height:0;border-top:1px dotted #222"></div>
<svg style="position:absolute;left:704.00px;top:335.00px" width="18" height="16" viewBox="0 0 18 16"><defs><linearGradient id="mg3" x1="0" y1="0" x2="0" y2="1"><stop offset="0" stop-color="#b9bccb"/><stop offset="1" stop-color="#8e92a6"/></linearGradient></defs><circle cx="11.800" cy="7.400" r="4.300" fill="#ececf6" stroke="url(#mg3)" stroke-width="1.100"/><circle cx="10.800" cy="6.600" r="2.300" fill="#fafaff"/><path d="M1.300 11.600l5.300-1.400" stroke="#3f8fc6" stroke-width="2" stroke-linecap="round"/></svg>
<div style="position:absolute;left:167.00px;top:355.00px;width:110.00px;height:21.00px;background:#44546a;"></div>
<div style="position:absolute;left:167.00px;top:376.00px;width:110.00px;height:1.00px;background:#d0d0d0;"></div>
<span style="position:absolute;top:357.63px;line-height:16px;font-size:12.60px;font-weight:bold;font-style:normal;color:#fff;white-space:pre;left:168.70px;transform-origin:0 50%;transform:scaleX(1.0411);">Widok:</span>
<span style="position:absolute;top:361.04px;line-height:15px;font-size:12.30px;font-weight:normal;font-style:normal;color:#000;white-space:pre;left:278.70px;transform-origin:0 50%;transform:scaleX(1.0660);">MTD</span>
<div style="position:absolute;left:277px;top:354px;width:426px;height:0;border-top:1px dotted #222"></div>
<svg style="position:absolute;left:704.00px;top:357.00px" width="18" height="16" viewBox="0 0 18 16"><defs><linearGradient id="mg4" x1="0" y1="0" x2="0" y2="1"><stop offset="0" stop-color="#b9bccb"/><stop offset="1" stop-color="#8e92a6"/></linearGradient></defs><circle cx="11.800" cy="7.400" r="4.300" fill="#ececf6" stroke="url(#mg4)" stroke-width="1.100"/><circle cx="10.800" cy="6.600" r="2.300" fill="#fafaff"/><path d="M1.300 11.600l5.300-1.400" stroke="#3f8fc6" stroke-width="2" stroke-linecap="round"/></svg>
<div style="position:absolute;left:277px;top:376px;width:426px;height:0;border-top:1px dotted #222"></div>
<div style="position:absolute;left:167.00px;top:266.00px;width:110.00px;height:1.00px;background:#d0d0d0;"></div>
<div style="position:absolute;left:276px;top:354px;width:0;height:23px;border-left:1px dotted #222"></div>
<span style="position:absolute;top:358.74px;line-height:15px;font-size:12.30px;font-weight:normal;font-style:normal;color:#bfbfbf;white-space:pre;left:482.50px;width:600px;text-align:center;transform-origin:50% 50%;transform:scaleX(1.0200);">0</span>
<span style="position:absolute;top:358.74px;line-height:15px;font-size:12.30px;font-weight:normal;font-style:normal;color:#bfbfbf;white-space:pre;left:594.50px;width:600px;text-align:center;transform-origin:50% 50%;transform:scaleX(1.0200);">G01</span>
<span style="position:absolute;top:358.74px;line-height:15px;font-size:12.30px;font-weight:normal;font-style:normal;color:#bfbfbf;white-space:pre;left:706.50px;width:600px;text-align:center;transform-origin:50% 50%;transform:scaleX(1.0200);">G02</span>
<span style="position:absolute;top:358.74px;line-height:15px;font-size:12.30px;font-weight:normal;font-style:normal;color:#bfbfbf;white-space:pre;left:818.50px;width:600px;text-align:center;transform-origin:50% 50%;transform:scaleX(1.0200);">G03</span>
<span style="position:absolute;top:358.74px;line-height:15px;font-size:12.30px;font-weight:normal;font-style:normal;color:#bfbfbf;white-space:pre;left:930.50px;width:600px;text-align:center;transform-origin:50% 50%;transform:scaleX(1.0200);">G04</span>
<span style="position:absolute;top:358.74px;line-height:15px;font-size:12.30px;font-weight:normal;font-style:normal;color:#bfbfbf;white-space:pre;left:1042.50px;width:600px;text-align:center;transform-origin:50% 50%;transform:scaleX(1.0200);">G05</span>
<div style="position:absolute;left:0;top:0;width:1920px;height:974px;overflow:hidden">
<div style="position:absolute;left:167.00px;top:386.00px;width:536.00px;height:21.00px;background:#44546a;"></div>
<div style="position:absolute;left:727.00px;top:386.00px;width:694.00px;height:21.00px;background:#44546a;"></div>
<div style="position:absolute;left:276.00px;top:386.00px;width:1.00px;height:21.00px;background:#8a96a6;"></div>
<div style="position:absolute;left:838.00px;top:386.00px;width:1.00px;height:21.00px;background:#c9ced6;"></div>
<div style="position:absolute;left:950.00px;top:386.00px;width:1.00px;height:21.00px;background:#c9ced6;"></div>
<div style="position:absolute;left:1062.00px;top:386.00px;width:1.00px;height:21.00px;background:#c9ced6;"></div>
<div style="position:absolute;left:1174.00px;top:386.00px;width:1.00px;height:21.00px;background:#c9ced6;"></div>
<div style="position:absolute;left:1286.00px;top:386.00px;width:1.00px;height:21.00px;background:#c9ced6;"></div>
<div style="position:absolute;left:1398.00px;top:386.00px;width:1.00px;height:21.00px;background:#c9ced6;"></div>
<div style="position:absolute;left:167.00px;top:407.00px;width:536.00px;height:1.00px;background:#e4e4e4;"></div>
<div style="position:absolute;left:727.00px;top:407.00px;width:694.00px;height:1.00px;background:#e4e4e4;"></div>
<div style="position:absolute;left:167px;top:386px;width:109px;height:21px;overflow:hidden">
<span style="position:absolute;top:1.93px;line-height:16px;font-size:12.60px;font-weight:bold;font-style:normal;color:#fff;white-space:pre;left:1.70px;transform-origin:0 50%;"></span>
</div>
<span style="position:absolute;top:387.93px;line-height:16px;font-size:12.60px;font-weight:bold;font-style:normal;color:#fff;white-space:pre;left:278.70px;transform-origin:0 50%;"></span>
<span style="position:absolute;top:388.63px;line-height:16px;font-size:12.60px;font-weight:bold;font-style:normal;color:#fff;white-space:pre;left:482.50px;width:600px;text-align:center;transform-origin:50% 50%;transform:scaleX(0.9700);">All</span>
<span style="position:absolute;top:388.63px;line-height:16px;font-size:12.60px;font-weight:bold;font-style:normal;color:#fff;white-space:pre;left:594.50px;width:600px;text-align:center;transform-origin:50% 50%;transform:scaleX(0.9700);">G01</span>
<span style="position:absolute;top:388.63px;line-height:16px;font-size:12.60px;font-weight:bold;font-style:normal;color:#fff;white-space:pre;left:706.50px;width:600px;text-align:center;transform-origin:50% 50%;transform:scaleX(0.9700);">G02</span>
<span style="position:absolute;top:388.63px;line-height:16px;font-size:12.60px;font-weight:bold;font-style:normal;color:#fff;white-space:pre;left:818.50px;width:600px;text-align:center;transform-origin:50% 50%;transform:scaleX(0.9700);">G03</span>
<span style="position:absolute;top:388.63px;line-height:16px;font-size:12.60px;font-weight:bold;font-style:normal;color:#fff;white-space:pre;left:930.50px;width:600px;text-align:center;transform-origin:50% 50%;transform:scaleX(0.9700);">G04</span>
<span style="position:absolute;top:388.63px;line-height:16px;font-size:12.60px;font-weight:bold;font-style:normal;color:#fff;white-space:pre;left:1042.50px;width:600px;text-align:center;transform-origin:50% 50%;transform:scaleX(0.9700);">G05</span>
<div style="position:absolute;left:167.00px;top:408.00px;width:536.00px;height:21.00px;background:#44546a;"></div>
<div style="position:absolute;left:727.00px;top:408.00px;width:694.00px;height:21.00px;background:#44546a;"></div>
<div style="position:absolute;left:167.00px;top:429.00px;width:536.00px;height:1.00px;background:#e4e4e4;"></div>
<div style="position:absolute;left:727.00px;top:429.00px;width:694.00px;height:1.00px;background:#e4e4e4;"></div>
<div style="position:absolute;left:167px;top:408px;width:109px;height:21px;overflow:hidden">
<span style="position:absolute;top:1.93px;line-height:16px;font-size:12.60px;font-weight:bold;font-style:normal;color:#fff;white-space:pre;left:1.70px;transform-origin:0 50%;transform:scaleX(0.9384);">STATS</span>
</div>
<span style="position:absolute;top:409.93px;line-height:16px;font-size:12.60px;font-weight:bold;font-style:normal;color:#fff;white-space:pre;left:278.70px;transform-origin:0 50%;transform:scaleX(0.9737);">Statystyki ilościowe</span>
<div style="position:absolute;left:167.00px;top:430.00px;width:536.00px;height:21.00px;background:#f2f2f2;"></div>
<div style="position:absolute;left:727.00px;top:430.00px;width:694.00px;height:21.00px;background:#f2f2f2;"></div>
<div style="position:absolute;left:167.00px;top:451.00px;width:536.00px;height:1.00px;background:#d4d4d4;"></div>
<div style="position:absolute;left:727.00px;top:451.00px;width:694.00px;height:1.00px;background:#d4d4d4;"></div>
<div style="position:absolute;left:166.00px;top:430.00px;width:1.00px;height:22.00px;background:#d4d4d4;"></div>
<div style="position:absolute;left:726.00px;top:430.00px;width:1.00px;height:22.00px;background:#d4d4d4;"></div>
<div style="position:absolute;left:838.00px;top:430.00px;width:1.00px;height:22.00px;background:#d4d4d4;"></div>
<div style="position:absolute;left:950.00px;top:430.00px;width:1.00px;height:22.00px;background:#d4d4d4;"></div>
<div style="position:absolute;left:1062.00px;top:430.00px;width:1.00px;height:22.00px;background:#d4d4d4;"></div>
<div style="position:absolute;left:1174.00px;top:430.00px;width:1.00px;height:22.00px;background:#d4d4d4;"></div>
<div style="position:absolute;left:1286.00px;top:430.00px;width:1.00px;height:22.00px;background:#d4d4d4;"></div>
<div style="position:absolute;left:1398.00px;top:430.00px;width:1.00px;height:22.00px;background:#d4d4d4;"></div>
<div style="position:absolute;left:167px;top:430px;width:109px;height:21px;overflow:hidden">
<span style="position:absolute;top:1.93px;line-height:16px;font-size:12.60px;font-weight:bold;font-style:normal;color:#000;white-space:pre;left:1.70px;transform-origin:0 50%;transform:scaleX(0.9207);">S_HC_NET</span>
</div>
<span style="position:absolute;top:431.93px;line-height:16px;font-size:12.60px;font-weight:bold;font-style:normal;color:#000;white-space:pre;left:278.70px;transform-origin:0 50%;transform:scaleX(1.0242);">Headcount (netto)</span>
<span style="position:absolute;top:430.73px;line-height:16px;font-size:12.60px;font-weight:bold;font-style:normal;color:#000;white-space:pre;right:1084.30px;transform-origin:100% 50%;">511,00</span>
<span style="position:absolute;top:430.73px;line-height:16px;font-size:12.60px;font-weight:bold;font-style:normal;color:#000;white-space:pre;right:972.30px;transform-origin:100% 50%;">162,00</span>
<span style="position:absolute;top:430.73px;line-height:16px;font-size:12.60px;font-weight:bold;font-style:normal;color:#000;white-space:pre;right:860.30px;transform-origin:100% 50%;">38,00</span>
<span style="position:absolute;top:430.73px;line-height:16px;font-size:12.60px;font-weight:bold;font-style:normal;color:#000;white-space:pre;right:748.30px;transform-origin:100% 50%;">118,00</span>
<span style="position:absolute;top:430.73px;line-height:16px;font-size:12.60px;font-weight:bold;font-style:normal;color:#000;white-space:pre;right:636.30px;transform-origin:100% 50%;">96,00</span>
<span style="position:absolute;top:430.73px;line-height:16px;font-size:12.60px;font-weight:bold;font-style:normal;color:#000;white-space:pre;right:524.30px;transform-origin:100% 50%;">38,00</span>
<div style="position:absolute;left:167.00px;top:452.00px;width:536.00px;height:21.00px;background:#f2f2f2;"></div>
<div style="position:absolute;left:727.00px;top:452.00px;width:694.00px;height:21.00px;background:#f2f2f2;"></div>
<div style="position:absolute;left:167.00px;top:473.00px;width:536.00px;height:1.00px;background:#d4d4d4;"></div>
<div style="position:absolute;left:727.00px;top:473.00px;width:694.00px;height:1.00px;background:#d4d4d4;"></div>
<div style="position:absolute;left:166.00px;top:452.00px;width:1.00px;height:22.00px;background:#d4d4d4;"></div>
<div style="position:absolute;left:726.00px;top:452.00px;width:1.00px;height:22.00px;background:#d4d4d4;"></div>
<div style="position:absolute;left:838.00px;top:452.00px;width:1.00px;height:22.00px;background:#d4d4d4;"></div>
<div style="position:absolute;left:950.00px;top:452.00px;width:1.00px;height:22.00px;background:#d4d4d4;"></div>
<div style="position:absolute;left:1062.00px;top:452.00px;width:1.00px;height:22.00px;background:#d4d4d4;"></div>
<div style="position:absolute;left:1174.00px;top:452.00px;width:1.00px;height:22.00px;background:#d4d4d4;"></div>
<div style="position:absolute;left:1286.00px;top:452.00px;width:1.00px;height:22.00px;background:#d4d4d4;"></div>
<div style="position:absolute;left:1398.00px;top:452.00px;width:1.00px;height:22.00px;background:#d4d4d4;"></div>
<div style="position:absolute;left:167px;top:452px;width:109px;height:21px;overflow:hidden">
<span style="position:absolute;top:1.93px;line-height:16px;font-size:12.60px;font-weight:bold;font-style:normal;color:#000;white-space:pre;left:1.70px;transform-origin:0 50%;transform:scaleX(0.9066);">S_FTE_NET</span>
</div>
<span style="position:absolute;top:453.93px;line-height:16px;font-size:12.60px;font-weight:bold;font-style:normal;color:#000;white-space:pre;left:278.70px;transform-origin:0 50%;transform:scaleX(0.9687);">FTE (netto)</span>
<span style="position:absolute;top:452.73px;line-height:16px;font-size:12.60px;font-weight:bold;font-style:normal;color:#000;white-space:pre;right:1084.30px;transform-origin:100% 50%;">509,63</span>
<span style="position:absolute;top:452.73px;line-height:16px;font-size:12.60px;font-weight:bold;font-style:normal;color:#000;white-space:pre;right:972.30px;transform-origin:100% 50%;">161,50</span>
<span style="position:absolute;top:452.73px;line-height:16px;font-size:12.60px;font-weight:bold;font-style:normal;color:#000;white-space:pre;right:860.30px;transform-origin:100% 50%;">37,38</span>
<span style="position:absolute;top:452.73px;line-height:16px;font-size:12.60px;font-weight:bold;font-style:normal;color:#000;white-space:pre;right:748.30px;transform-origin:100% 50%;">117,75</span>
<span style="position:absolute;top:452.73px;line-height:16px;font-size:12.60px;font-weight:bold;font-style:normal;color:#000;white-space:pre;right:636.30px;transform-origin:100% 50%;">96,00</span>
<span style="position:absolute;top:452.73px;line-height:16px;font-size:12.60px;font-weight:bold;font-style:normal;color:#000;white-space:pre;right:524.30px;transform-origin:100% 50%;">38,00</span>
<div style="position:absolute;left:167.00px;top:474.00px;width:536.00px;height:21.00px;background:#44546a;"></div>
<div style="position:absolute;left:727.00px;top:474.00px;width:694.00px;height:21.00px;background:#44546a;"></div>
<div style="position:absolute;left:167.00px;top:495.00px;width:536.00px;height:1.00px;background:#e4e4e4;"></div>
<div style="position:absolute;left:727.00px;top:495.00px;width:694.00px;height:1.00px;background:#e4e4e4;"></div>
<div style="position:absolute;left:167px;top:474px;width:109px;height:21px;overflow:hidden">
<span style="position:absolute;top:1.93px;line-height:16px;font-size:12.60px;font-weight:bold;font-style:normal;color:#fff;white-space:pre;left:1.70px;transform-origin:0 50%;transform:scaleX(0.8670);">ABSENCES</span>
</div>
<span style="position:absolute;top:475.93px;line-height:16px;font-size:12.60px;font-weight:bold;font-style:normal;color:#fff;white-space:pre;left:278.70px;transform-origin:0 50%;transform:scaleX(0.8423);">ABSENCJE</span>
<div style="position:absolute;left:167.00px;top:496.00px;width:536.00px;height:21.00px;background:#fff;"></div>
<div style="position:absolute;left:727.00px;top:496.00px;width:694.00px;height:21.00px;background:#fff;"></div>
<div style="position:absolute;left:167.00px;top:517.00px;width:536.00px;height:1.00px;background:#d4d4d4;"></div>
<div style="position:absolute;left:727.00px;top:517.00px;width:694.00px;height:1.00px;background:#d4d4d4;"></div>
<div style="position:absolute;left:166.00px;top:496.00px;width:1.00px;height:22.00px;background:#d4d4d4;"></div>
<div style="position:absolute;left:726.00px;top:496.00px;width:1.00px;height:22.00px;background:#d4d4d4;"></div>
<div style="position:absolute;left:838.00px;top:496.00px;width:1.00px;height:22.00px;background:#d4d4d4;"></div>
<div style="position:absolute;left:950.00px;top:496.00px;width:1.00px;height:22.00px;background:#d4d4d4;"></div>
<div style="position:absolute;left:1062.00px;top:496.00px;width:1.00px;height:22.00px;background:#d4d4d4;"></div>
<div style="position:absolute;left:1174.00px;top:496.00px;width:1.00px;height:22.00px;background:#d4d4d4;"></div>
<div style="position:absolute;left:1286.00px;top:496.00px;width:1.00px;height:22.00px;background:#d4d4d4;"></div>
<div style="position:absolute;left:1398.00px;top:496.00px;width:1.00px;height:22.00px;background:#d4d4d4;"></div>
<div style="position:absolute;left:167px;top:496px;width:109px;height:21px;overflow:hidden">
<span style="position:absolute;top:2.54px;line-height:15px;font-size:12.30px;font-weight:normal;font-style:normal;color:#000;white-space:pre;left:1.70px;transform-origin:0 50%;transform:scaleX(0.9728);">S_NOMINAL_DAYS</span>
</div>
<span style="position:absolute;top:498.54px;line-height:15px;font-size:12.30px;font-weight:normal;font-style:normal;color:#000;white-space:pre;left:278.70px;transform-origin:0 50%;transform:scaleX(1.0327);">Dni nominalne</span>
<span style="position:absolute;top:498.24px;line-height:15px;font-size:12.30px;font-weight:normal;font-style:normal;color:#000;white-space:pre;right:1084.30px;transform-origin:100% 50%;transform:scaleX(1.0200);">10 699,00</span>
<span style="position:absolute;top:498.24px;line-height:15px;font-size:12.30px;font-weight:normal;font-style:normal;color:#000;white-space:pre;right:972.30px;transform-origin:100% 50%;transform:scaleX(1.0200);">3 391,00</span>
<span style="position:absolute;top:498.24px;line-height:15px;font-size:12.30px;font-weight:normal;font-style:normal;color:#000;white-space:pre;right:860.30px;transform-origin:100% 50%;transform:scaleX(1.0200);">783,00</span>
<span style="position:absolute;top:498.24px;line-height:15px;font-size:12.30px;font-weight:normal;font-style:normal;color:#000;white-space:pre;right:748.30px;transform-origin:100% 50%;transform:scaleX(1.0200);">2 472,00</span>
<span style="position:absolute;top:498.24px;line-height:15px;font-size:12.30px;font-weight:normal;font-style:normal;color:#000;white-space:pre;right:636.30px;transform-origin:100% 50%;transform:scaleX(1.0200);">2 016,00</span>
<span style="position:absolute;top:498.24px;line-height:15px;font-size:12.30px;font-weight:normal;font-style:normal;color:#000;white-space:pre;right:524.30px;transform-origin:100% 50%;transform:scaleX(1.0200);">798,00</span>
<div style="position:absolute;left:167.00px;top:518.00px;width:536.00px;height:21.00px;background:#fff;"></div>
<div style="position:absolute;left:727.00px;top:518.00px;width:694.00px;height:21.00px;background:#fff;"></div>
<div style="position:absolute;left:167.00px;top:539.00px;width:536.00px;height:1.00px;background:#d4d4d4;"></div>
<div style="position:absolute;left:727.00px;top:539.00px;width:694.00px;height:1.00px;background:#d4d4d4;"></div>
<div style="position:absolute;left:166.00px;top:518.00px;width:1.00px;height:22.00px;background:#d4d4d4;"></div>
<div style="position:absolute;left:726.00px;top:518.00px;width:1.00px;height:22.00px;background:#d4d4d4;"></div>
<div style="position:absolute;left:838.00px;top:518.00px;width:1.00px;height:22.00px;background:#d4d4d4;"></div>
<div style="position:absolute;left:950.00px;top:518.00px;width:1.00px;height:22.00px;background:#d4d4d4;"></div>
<div style="position:absolute;left:1062.00px;top:518.00px;width:1.00px;height:22.00px;background:#d4d4d4;"></div>
<div style="position:absolute;left:1174.00px;top:518.00px;width:1.00px;height:22.00px;background:#d4d4d4;"></div>
<div style="position:absolute;left:1286.00px;top:518.00px;width:1.00px;height:22.00px;background:#d4d4d4;"></div>
<div style="position:absolute;left:1398.00px;top:518.00px;width:1.00px;height:22.00px;background:#d4d4d4;"></div>
<div style="position:absolute;left:167px;top:518px;width:109px;height:21px;overflow:hidden">
<span style="position:absolute;top:2.54px;line-height:15px;font-size:12.30px;font-weight:normal;font-style:normal;color:#000;white-space:pre;left:1.70px;transform-origin:0 50%;transform:scaleX(0.9188);">S_ABSENCE_TOTAL</span>
</div>
<span style="position:absolute;top:520.54px;line-height:15px;font-size:12.30px;font-weight:normal;font-style:normal;color:#000;white-space:pre;left:278.70px;transform-origin:0 50%;transform:scaleX(1.0045);">Dni absencji</span>
<span style="position:absolute;top:520.24px;line-height:15px;font-size:12.30px;font-weight:normal;font-style:normal;color:#000;white-space:pre;right:1084.30px;transform-origin:100% 50%;transform:scaleX(1.0200);">570,00</span>
<span style="position:absolute;top:520.24px;line-height:15px;font-size:12.30px;font-weight:normal;font-style:normal;color:#000;white-space:pre;right:972.30px;transform-origin:100% 50%;transform:scaleX(1.0200);">225,00</span>
<span style="position:absolute;top:520.24px;line-height:15px;font-size:12.30px;font-weight:normal;font-style:normal;color:#000;white-space:pre;right:860.30px;transform-origin:100% 50%;transform:scaleX(1.0200);">19,00</span>
<span style="position:absolute;top:520.24px;line-height:15px;font-size:12.30px;font-weight:normal;font-style:normal;color:#000;white-space:pre;right:748.30px;transform-origin:100% 50%;transform:scaleX(1.0200);">216,00</span>
<span style="position:absolute;top:520.24px;line-height:15px;font-size:12.30px;font-weight:normal;font-style:normal;color:#000;white-space:pre;right:636.30px;transform-origin:100% 50%;transform:scaleX(1.0200);">56,00</span>
<span style="position:absolute;top:520.24px;line-height:15px;font-size:12.30px;font-weight:normal;font-style:normal;color:#000;white-space:pre;right:524.30px;transform-origin:100% 50%;transform:scaleX(1.0200);">8,00</span>
<div style="position:absolute;left:167.00px;top:540.00px;width:536.00px;height:21.00px;background:#fff;"></div>
<div style="position:absolute;left:727.00px;top:540.00px;width:694.00px;height:21.00px;background:#fff;"></div>
<div style="position:absolute;left:167.00px;top:561.00px;width:536.00px;height:1.00px;background:#d4d4d4;"></div>
<div style="position:absolute;left:727.00px;top:561.00px;width:694.00px;height:1.00px;background:#d4d4d4;"></div>
<div style="position:absolute;left:166.00px;top:540.00px;width:1.00px;height:22.00px;background:#d4d4d4;"></div>
<div style="position:absolute;left:726.00px;top:540.00px;width:1.00px;height:22.00px;background:#d4d4d4;"></div>
<div style="position:absolute;left:838.00px;top:540.00px;width:1.00px;height:22.00px;background:#d4d4d4;"></div>
<div style="position:absolute;left:950.00px;top:540.00px;width:1.00px;height:22.00px;background:#d4d4d4;"></div>
<div style="position:absolute;left:1062.00px;top:540.00px;width:1.00px;height:22.00px;background:#d4d4d4;"></div>
<div style="position:absolute;left:1174.00px;top:540.00px;width:1.00px;height:22.00px;background:#d4d4d4;"></div>
<div style="position:absolute;left:1286.00px;top:540.00px;width:1.00px;height:22.00px;background:#d4d4d4;"></div>
<div style="position:absolute;left:1398.00px;top:540.00px;width:1.00px;height:22.00px;background:#d4d4d4;"></div>
<div style="position:absolute;left:167px;top:540px;width:109px;height:21px;overflow:hidden">
<span style="position:absolute;top:2.54px;line-height:15px;font-size:12.30px;font-weight:normal;font-style:normal;color:#000;white-space:pre;left:1.70px;transform-origin:0 50%;transform:scaleX(0.8921);">S_ABS_ST</span>
</div>
<span style="position:absolute;top:542.54px;line-height:15px;font-size:12.30px;font-weight:normal;font-style:normal;color:#000;white-space:pre;left:278.70px;transform-origin:0 50%;transform:scaleX(1.0229);">Absencje nieregularne</span>
<span style="position:absolute;top:542.24px;line-height:15px;font-size:12.30px;font-weight:normal;font-style:normal;color:#000;white-space:pre;right:1084.30px;transform-origin:100% 50%;transform:scaleX(1.0200);">431,00</span>
<span style="position:absolute;top:542.24px;line-height:15px;font-size:12.30px;font-weight:normal;font-style:normal;color:#000;white-space:pre;right:972.30px;transform-origin:100% 50%;transform:scaleX(1.0200);">183,00</span>
<span style="position:absolute;top:542.24px;line-height:15px;font-size:12.30px;font-weight:normal;font-style:normal;color:#000;white-space:pre;right:860.30px;transform-origin:100% 50%;transform:scaleX(1.0200);">19,00</span>
<span style="position:absolute;top:542.24px;line-height:15px;font-size:12.30px;font-weight:normal;font-style:normal;color:#000;white-space:pre;right:748.30px;transform-origin:100% 50%;transform:scaleX(1.0200);">119,00</span>
<span style="position:absolute;top:542.24px;line-height:15px;font-size:12.30px;font-weight:normal;font-style:normal;color:#000;white-space:pre;right:636.30px;transform-origin:100% 50%;transform:scaleX(1.0200);">56,00</span>
<span style="position:absolute;top:542.24px;line-height:15px;font-size:12.30px;font-weight:normal;font-style:normal;color:#000;white-space:pre;right:524.30px;transform-origin:100% 50%;transform:scaleX(1.0200);">8,00</span>
<div style="position:absolute;left:167.00px;top:562.00px;width:536.00px;height:21.00px;background:#fff;"></div>
<div style="position:absolute;left:727.00px;top:562.00px;width:694.00px;height:21.00px;background:#fff;"></div>
<div style="position:absolute;left:167.00px;top:583.00px;width:536.00px;height:1.00px;background:#d4d4d4;"></div>
<div style="position:absolute;left:727.00px;top:583.00px;width:694.00px;height:1.00px;background:#d4d4d4;"></div>
<div style="position:absolute;left:166.00px;top:562.00px;width:1.00px;height:22.00px;background:#d4d4d4;"></div>
<div style="position:absolute;left:726.00px;top:562.00px;width:1.00px;height:22.00px;background:#d4d4d4;"></div>
<div style="position:absolute;left:838.00px;top:562.00px;width:1.00px;height:22.00px;background:#d4d4d4;"></div>
<div style="position:absolute;left:950.00px;top:562.00px;width:1.00px;height:22.00px;background:#d4d4d4;"></div>
<div style="position:absolute;left:1062.00px;top:562.00px;width:1.00px;height:22.00px;background:#d4d4d4;"></div>
<div style="position:absolute;left:1174.00px;top:562.00px;width:1.00px;height:22.00px;background:#d4d4d4;"></div>
<div style="position:absolute;left:1286.00px;top:562.00px;width:1.00px;height:22.00px;background:#d4d4d4;"></div>
<div style="position:absolute;left:1398.00px;top:562.00px;width:1.00px;height:22.00px;background:#d4d4d4;"></div>
<div style="position:absolute;left:167px;top:562px;width:109px;height:21px;overflow:hidden">
<span style="position:absolute;top:2.54px;line-height:15px;font-size:12.30px;font-weight:normal;font-style:normal;color:#000;white-space:pre;left:1.70px;transform-origin:0 50%;transform:scaleX(0.9209);">S_ABS_LT</span>
</div>
<span style="position:absolute;top:564.54px;line-height:15px;font-size:12.30px;font-weight:normal;font-style:normal;color:#000;white-space:pre;left:278.70px;transform-origin:0 50%;transform:scaleX(1.0366);">Absencje długoterminowe</span>
<span style="position:absolute;top:564.24px;line-height:15px;font-size:12.30px;font-weight:normal;font-style:normal;color:#000;white-space:pre;right:1084.30px;transform-origin:100% 50%;transform:scaleX(1.0200);">139,00</span>
<span style="position:absolute;top:564.24px;line-height:15px;font-size:12.30px;font-weight:normal;font-style:normal;color:#000;white-space:pre;right:972.30px;transform-origin:100% 50%;transform:scaleX(1.0200);">42,00</span>
<span style="position:absolute;top:564.24px;line-height:15px;font-size:12.30px;font-weight:normal;font-style:normal;color:#000;white-space:pre;right:748.30px;transform-origin:100% 50%;transform:scaleX(1.0200);">97,00</span>
<div style="position:absolute;left:167.00px;top:584.00px;width:536.00px;height:21.00px;background:#fff;"></div>
<div style="position:absolute;left:727.00px;top:584.00px;width:694.00px;height:21.00px;background:#fff;"></div>
<div style="position:absolute;left:167.00px;top:605.00px;width:536.00px;height:1.00px;background:#d4d4d4;"></div>
<div style="position:absolute;left:727.00px;top:605.00px;width:694.00px;height:1.00px;background:#d4d4d4;"></div>
<div style="position:absolute;left:166.00px;top:584.00px;width:1.00px;height:22.00px;background:#d4d4d4;"></div>
<div style="position:absolute;left:726.00px;top:584.00px;width:1.00px;height:22.00px;background:#d4d4d4;"></div>
<div style="position:absolute;left:838.00px;top:584.00px;width:1.00px;height:22.00px;background:#d4d4d4;"></div>
<div style="position:absolute;left:950.00px;top:584.00px;width:1.00px;height:22.00px;background:#d4d4d4;"></div>
<div style="position:absolute;left:1062.00px;top:584.00px;width:1.00px;height:22.00px;background:#d4d4d4;"></div>
<div style="position:absolute;left:1174.00px;top:584.00px;width:1.00px;height:22.00px;background:#d4d4d4;"></div>
<div style="position:absolute;left:1286.00px;top:584.00px;width:1.00px;height:22.00px;background:#d4d4d4;"></div>
<div style="position:absolute;left:1398.00px;top:584.00px;width:1.00px;height:22.00px;background:#d4d4d4;"></div>
<div style="position:absolute;left:167px;top:584px;width:109px;height:21px;overflow:hidden">
<span style="position:absolute;top:2.54px;line-height:15px;font-size:12.30px;font-weight:normal;font-style:italic;color:#000;white-space:pre;left:1.70px;transform-origin:0 50%;transform:scaleX(0.9475);">S_ABS_RATIO</span>
</div>
<span style="position:absolute;top:586.54px;line-height:15px;font-size:12.30px;font-weight:normal;font-style:italic;color:#000;white-space:pre;left:278.70px;transform-origin:0 50%;transform:scaleX(1.0110);">Wskaźnik absencji nieregularnych</span>
<span style="position:absolute;top:586.24px;line-height:15px;font-size:12.30px;font-weight:normal;font-style:italic;color:#000;white-space:pre;right:1085.10px;transform-origin:100% 50%;transform:scaleX(1.0200);">4,03%</span>
<span style="position:absolute;top:586.24px;line-height:15px;font-size:12.30px;font-weight:normal;font-style:italic;color:#000;white-space:pre;right:973.10px;transform-origin:100% 50%;transform:scaleX(1.0200);">5,40%</span>
<span style="position:absolute;top:586.24px;line-height:15px;font-size:12.30px;font-weight:normal;font-style:italic;color:#000;white-space:pre;right:861.10px;transform-origin:100% 50%;transform:scaleX(1.0200);">2,43%</span>
<span style="position:absolute;top:586.24px;line-height:15px;font-size:12.30px;font-weight:normal;font-style:italic;color:#000;white-space:pre;right:749.10px;transform-origin:100% 50%;transform:scaleX(1.0200);">4,81%</span>
<span style="position:absolute;top:586.24px;line-height:15px;font-size:12.30px;font-weight:normal;font-style:italic;color:#000;white-space:pre;right:637.10px;transform-origin:100% 50%;transform:scaleX(1.0200);">2,78%</span>
<span style="position:absolute;top:586.24px;line-height:15px;font-size:12.30px;font-weight:normal;font-style:italic;color:#000;white-space:pre;right:525.10px;transform-origin:100% 50%;transform:scaleX(1.0200);">1,00%</span>
<div style="position:absolute;left:167.00px;top:606.00px;width:536.00px;height:21.00px;background:#fff;"></div>
<div style="position:absolute;left:727.00px;top:606.00px;width:694.00px;height:21.00px;background:#fff;"></div>
<div style="position:absolute;left:167.00px;top:627.00px;width:536.00px;height:1.00px;background:#d4d4d4;"></div>
<div style="position:absolute;left:727.00px;top:627.00px;width:694.00px;height:1.00px;background:#d4d4d4;"></div>
<div style="position:absolute;left:166.00px;top:606.00px;width:1.00px;height:22.00px;background:#d4d4d4;"></div>
<div style="position:absolute;left:726.00px;top:606.00px;width:1.00px;height:22.00px;background:#d4d4d4;"></div>
<div style="position:absolute;left:838.00px;top:606.00px;width:1.00px;height:22.00px;background:#d4d4d4;"></div>
<div style="position:absolute;left:950.00px;top:606.00px;width:1.00px;height:22.00px;background:#d4d4d4;"></div>
<div style="position:absolute;left:1062.00px;top:606.00px;width:1.00px;height:22.00px;background:#d4d4d4;"></div>
<div style="position:absolute;left:1174.00px;top:606.00px;width:1.00px;height:22.00px;background:#d4d4d4;"></div>
<div style="position:absolute;left:1286.00px;top:606.00px;width:1.00px;height:22.00px;background:#d4d4d4;"></div>
<div style="position:absolute;left:1398.00px;top:606.00px;width:1.00px;height:22.00px;background:#d4d4d4;"></div>
<div style="position:absolute;left:167px;top:606px;width:109px;height:21px;overflow:hidden">
<span style="position:absolute;top:2.54px;line-height:15px;font-size:12.30px;font-weight:normal;font-style:italic;color:#000;white-space:pre;left:1.70px;transform-origin:0 50%;transform:scaleX(0.9262);">S_ABS_RATIO_SL</span>
</div>
<span style="position:absolute;top:608.54px;line-height:15px;font-size:12.30px;font-weight:normal;font-style:italic;color:#000;white-space:pre;left:278.70px;transform-origin:0 50%;transform:scaleX(1.0059);">Absencje chorobowe %</span>
<span style="position:absolute;top:608.24px;line-height:15px;font-size:12.30px;font-weight:normal;font-style:italic;color:#000;white-space:pre;right:1085.10px;transform-origin:100% 50%;transform:scaleX(1.0200);">2,64%</span>
<span style="position:absolute;top:608.24px;line-height:15px;font-size:12.30px;font-weight:normal;font-style:italic;color:#000;white-space:pre;right:973.10px;transform-origin:100% 50%;transform:scaleX(1.0200);">5,22%</span>
<span style="position:absolute;top:608.24px;line-height:15px;font-size:12.30px;font-weight:normal;font-style:italic;color:#000;white-space:pre;right:861.10px;transform-origin:100% 50%;transform:scaleX(1.0200);">1,40%</span>
<span style="position:absolute;top:608.24px;line-height:15px;font-size:12.30px;font-weight:normal;font-style:italic;color:#000;white-space:pre;right:749.10px;transform-origin:100% 50%;transform:scaleX(1.0200);">2,27%</span>
<span style="position:absolute;top:608.24px;line-height:15px;font-size:12.30px;font-weight:normal;font-style:italic;color:#000;white-space:pre;right:637.10px;transform-origin:100% 50%;transform:scaleX(1.0200);">1,59%</span>
<span style="position:absolute;top:608.24px;line-height:15px;font-size:12.30px;font-weight:normal;font-style:italic;color:#000;white-space:pre;right:525.10px;transform-origin:100% 50%;transform:scaleX(1.0200);">0,63%</span>
<div style="position:absolute;left:167.00px;top:628.00px;width:536.00px;height:21.00px;background:#fff;"></div>
<div style="position:absolute;left:727.00px;top:628.00px;width:694.00px;height:21.00px;background:#fff;"></div>
<div style="position:absolute;left:167.00px;top:649.00px;width:536.00px;height:1.00px;background:#d4d4d4;"></div>
<div style="position:absolute;left:727.00px;top:649.00px;width:694.00px;height:1.00px;background:#d4d4d4;"></div>
<div style="position:absolute;left:166.00px;top:628.00px;width:1.00px;height:22.00px;background:#d4d4d4;"></div>
<div style="position:absolute;left:726.00px;top:628.00px;width:1.00px;height:22.00px;background:#d4d4d4;"></div>
<div style="position:absolute;left:838.00px;top:628.00px;width:1.00px;height:22.00px;background:#d4d4d4;"></div>
<div style="position:absolute;left:950.00px;top:628.00px;width:1.00px;height:22.00px;background:#d4d4d4;"></div>
<div style="position:absolute;left:1062.00px;top:628.00px;width:1.00px;height:22.00px;background:#d4d4d4;"></div>
<div style="position:absolute;left:1174.00px;top:628.00px;width:1.00px;height:22.00px;background:#d4d4d4;"></div>
<div style="position:absolute;left:1286.00px;top:628.00px;width:1.00px;height:22.00px;background:#d4d4d4;"></div>
<div style="position:absolute;left:1398.00px;top:628.00px;width:1.00px;height:22.00px;background:#d4d4d4;"></div>
<div style="position:absolute;left:167px;top:628px;width:109px;height:21px;overflow:hidden">
<span style="position:absolute;top:2.54px;line-height:15px;font-size:12.30px;font-weight:normal;font-style:italic;color:#000;white-space:pre;left:1.70px;transform-origin:0 50%;transform:scaleX(0.9502);">S_ABS_RATIO_OKOL</span>
</div>
<span style="position:absolute;top:630.54px;line-height:15px;font-size:12.30px;font-weight:normal;font-style:italic;color:#000;white-space:pre;left:278.70px;transform-origin:0 50%;transform:scaleX(0.9933);">Absencje okolicznościowe %</span>
<span style="position:absolute;top:630.24px;line-height:15px;font-size:12.30px;font-weight:normal;font-style:italic;color:#000;white-space:pre;right:1085.10px;transform-origin:100% 50%;transform:scaleX(1.0200);">1,36%</span>
<span style="position:absolute;top:630.24px;line-height:15px;font-size:12.30px;font-weight:normal;font-style:italic;color:#000;white-space:pre;right:973.10px;transform-origin:100% 50%;transform:scaleX(1.0200);">0,09%</span>
<span style="position:absolute;top:630.24px;line-height:15px;font-size:12.30px;font-weight:normal;font-style:italic;color:#000;white-space:pre;right:861.10px;transform-origin:100% 50%;transform:scaleX(1.0200);">1,02%</span>
<span style="position:absolute;top:630.24px;line-height:15px;font-size:12.30px;font-weight:normal;font-style:italic;color:#000;white-space:pre;right:749.10px;transform-origin:100% 50%;transform:scaleX(1.0200);">2,55%</span>
<span style="position:absolute;top:630.24px;line-height:15px;font-size:12.30px;font-weight:normal;font-style:italic;color:#000;white-space:pre;right:637.10px;transform-origin:100% 50%;transform:scaleX(1.0200);">1,19%</span>
<span style="position:absolute;top:630.24px;line-height:15px;font-size:12.30px;font-weight:normal;font-style:italic;color:#000;white-space:pre;right:525.10px;transform-origin:100% 50%;transform:scaleX(1.0200);">0,38%</span>
<div style="position:absolute;left:167.00px;top:650.00px;width:536.00px;height:21.00px;background:#fff;"></div>
<div style="position:absolute;left:727.00px;top:650.00px;width:694.00px;height:21.00px;background:#fff;"></div>
<div style="position:absolute;left:167.00px;top:671.00px;width:536.00px;height:1.00px;background:#d4d4d4;"></div>
<div style="position:absolute;left:727.00px;top:671.00px;width:694.00px;height:1.00px;background:#d4d4d4;"></div>
<div style="position:absolute;left:166.00px;top:650.00px;width:1.00px;height:22.00px;background:#d4d4d4;"></div>
<div style="position:absolute;left:726.00px;top:650.00px;width:1.00px;height:22.00px;background:#d4d4d4;"></div>
<div style="position:absolute;left:838.00px;top:650.00px;width:1.00px;height:22.00px;background:#d4d4d4;"></div>
<div style="position:absolute;left:950.00px;top:650.00px;width:1.00px;height:22.00px;background:#d4d4d4;"></div>
<div style="position:absolute;left:1062.00px;top:650.00px;width:1.00px;height:22.00px;background:#d4d4d4;"></div>
<div style="position:absolute;left:1174.00px;top:650.00px;width:1.00px;height:22.00px;background:#d4d4d4;"></div>
<div style="position:absolute;left:1286.00px;top:650.00px;width:1.00px;height:22.00px;background:#d4d4d4;"></div>
<div style="position:absolute;left:1398.00px;top:650.00px;width:1.00px;height:22.00px;background:#d4d4d4;"></div>
<div style="position:absolute;left:167px;top:650px;width:109px;height:21px;overflow:hidden">
<span style="position:absolute;top:2.54px;line-height:15px;font-size:12.30px;font-weight:normal;font-style:italic;color:#000;white-space:pre;left:1.70px;transform-origin:0 50%;transform:scaleX(0.9394);">S_ABS_RATIO_OTHER</span>
</div>
<span style="position:absolute;top:652.54px;line-height:15px;font-size:12.30px;font-weight:normal;font-style:italic;color:#000;white-space:pre;left:278.70px;transform-origin:0 50%;">Absencje pozostałe %</span>
<span style="position:absolute;top:652.24px;line-height:15px;font-size:12.30px;font-weight:normal;font-style:italic;color:#000;white-space:pre;right:1085.10px;transform-origin:100% 50%;transform:scaleX(1.0200);">0,03%</span>
<span style="position:absolute;top:652.24px;line-height:15px;font-size:12.30px;font-weight:normal;font-style:italic;color:#000;white-space:pre;right:973.10px;transform-origin:100% 50%;transform:scaleX(1.0200);">0,09%</span>
<div style="position:absolute;left:167.00px;top:672.00px;width:536.00px;height:21.00px;background:#44546a;"></div>
<div style="position:absolute;left:727.00px;top:672.00px;width:694.00px;height:21.00px;background:#44546a;"></div>
<div style="position:absolute;left:167.00px;top:693.00px;width:536.00px;height:1.00px;background:#e4e4e4;"></div>
<div style="position:absolute;left:727.00px;top:693.00px;width:694.00px;height:1.00px;background:#e4e4e4;"></div>
<div style="position:absolute;left:167px;top:672px;width:109px;height:21px;overflow:hidden">
<span style="position:absolute;top:1.93px;line-height:16px;font-size:12.60px;font-weight:bold;font-style:normal;color:#fff;white-space:pre;left:1.70px;transform-origin:0 50%;transform:scaleX(0.9264);">TURNOVER</span>
</div>
<span style="position:absolute;top:673.93px;line-height:16px;font-size:12.60px;font-weight:bold;font-style:normal;color:#fff;white-space:pre;left:278.70px;transform-origin:0 50%;transform:scaleX(0.8638);">ROTACJE</span>
<div style="position:absolute;left:167.00px;top:694.00px;width:536.00px;height:21.00px;background:#d9e1f2;"></div>
<div style="position:absolute;left:727.00px;top:694.00px;width:694.00px;height:21.00px;background:#d9e1f2;"></div>
<div style="position:absolute;left:167.00px;top:715.00px;width:536.00px;height:1.00px;background:#d4d4d4;"></div>
<div style="position:absolute;left:727.00px;top:715.00px;width:694.00px;height:1.00px;background:#d4d4d4;"></div>
<div style="position:absolute;left:166.00px;top:694.00px;width:1.00px;height:22.00px;background:#d4d4d4;"></div>
<div style="position:absolute;left:726.00px;top:694.00px;width:1.00px;height:22.00px;background:#d4d4d4;"></div>
<div style="position:absolute;left:838.00px;top:694.00px;width:1.00px;height:22.00px;background:#d4d4d4;"></div>
<div style="position:absolute;left:950.00px;top:694.00px;width:1.00px;height:22.00px;background:#d4d4d4;"></div>
<div style="position:absolute;left:1062.00px;top:694.00px;width:1.00px;height:22.00px;background:#d4d4d4;"></div>
<div style="position:absolute;left:1174.00px;top:694.00px;width:1.00px;height:22.00px;background:#d4d4d4;"></div>
<div style="position:absolute;left:1286.00px;top:694.00px;width:1.00px;height:22.00px;background:#d4d4d4;"></div>
<div style="position:absolute;left:1398.00px;top:694.00px;width:1.00px;height:22.00px;background:#d4d4d4;"></div>
<div style="position:absolute;left:167px;top:694px;width:109px;height:21px;overflow:hidden">
<span style="position:absolute;top:1.93px;line-height:16px;font-size:12.60px;font-weight:bold;font-style:normal;color:#000;white-space:pre;left:1.70px;transform-origin:0 50%;transform:scaleX(0.9282);">G_TOTAL</span>
</div>
<span style="position:absolute;top:695.93px;line-height:16px;font-size:12.60px;font-weight:bold;font-style:normal;color:#000;white-space:pre;left:278.70px;transform-origin:0 50%;transform:scaleX(0.9042);">KOSZTY OGÓŁEM</span>
<span style="position:absolute;top:694.73px;line-height:16px;font-size:12.60px;font-weight:bold;font-style:normal;color:#000;white-space:pre;right:1084.30px;transform-origin:100% 50%;">5 244 047,04</span>
<span style="position:absolute;top:694.73px;line-height:16px;font-size:12.60px;font-weight:bold;font-style:normal;color:#000;white-space:pre;right:972.30px;transform-origin:100% 50%;">1 018 871,95</span>
<span style="position:absolute;top:694.73px;line-height:16px;font-size:12.60px;font-weight:bold;font-style:normal;color:#000;white-space:pre;right:860.30px;transform-origin:100% 50%;">275 729,61</span>
<span style="position:absolute;top:694.73px;line-height:16px;font-size:12.60px;font-weight:bold;font-style:normal;color:#000;white-space:pre;right:748.30px;transform-origin:100% 50%;">936 541,98</span>
<span style="position:absolute;top:694.73px;line-height:16px;font-size:12.60px;font-weight:bold;font-style:normal;color:#000;white-space:pre;right:636.30px;transform-origin:100% 50%;">1 253 157,99</span>
<span style="position:absolute;top:694.73px;line-height:16px;font-size:12.60px;font-weight:bold;font-style:normal;color:#000;white-space:pre;right:524.30px;transform-origin:100% 50%;">472 454,02</span>
<div style="position:absolute;left:167.00px;top:716.00px;width:536.00px;height:21.00px;background:#f2f2f2;"></div>
<div style="position:absolute;left:727.00px;top:716.00px;width:694.00px;height:21.00px;background:#f2f2f2;"></div>
<div style="position:absolute;left:167.00px;top:737.00px;width:536.00px;height:1.00px;background:#d4d4d4;"></div>
<div style="position:absolute;left:727.00px;top:737.00px;width:694.00px;height:1.00px;background:#d4d4d4;"></div>
<div style="position:absolute;left:166.00px;top:716.00px;width:1.00px;height:22.00px;background:#d4d4d4;"></div>
<div style="position:absolute;left:726.00px;top:716.00px;width:1.00px;height:22.00px;background:#d4d4d4;"></div>
<div style="position:absolute;left:838.00px;top:716.00px;width:1.00px;height:22.00px;background:#d4d4d4;"></div>
<div style="position:absolute;left:950.00px;top:716.00px;width:1.00px;height:22.00px;background:#d4d4d4;"></div>
<div style="position:absolute;left:1062.00px;top:716.00px;width:1.00px;height:22.00px;background:#d4d4d4;"></div>
<div style="position:absolute;left:1174.00px;top:716.00px;width:1.00px;height:22.00px;background:#d4d4d4;"></div>
<div style="position:absolute;left:1286.00px;top:716.00px;width:1.00px;height:22.00px;background:#d4d4d4;"></div>
<div style="position:absolute;left:1398.00px;top:716.00px;width:1.00px;height:22.00px;background:#d4d4d4;"></div>
<div style="position:absolute;left:167px;top:716px;width:109px;height:21px;overflow:hidden">
<span style="position:absolute;top:1.93px;line-height:16px;font-size:12.60px;font-weight:bold;font-style:normal;color:#000;white-space:pre;left:1.70px;transform-origin:0 50%;transform:scaleX(0.9867);">G10</span>
</div>
<span style="position:absolute;top:717.93px;line-height:16px;font-size:12.60px;font-weight:bold;font-style:normal;color:#000;white-space:pre;left:278.70px;transform-origin:0 50%;transform:scaleX(1.0120);">Wynagrodzenia</span>
<span style="position:absolute;top:716.73px;line-height:16px;font-size:12.60px;font-weight:bold;font-style:normal;color:#000;white-space:pre;right:1084.30px;transform-origin:100% 50%;">3 431 921,86</span>
<span style="position:absolute;top:716.73px;line-height:16px;font-size:12.60px;font-weight:bold;font-style:normal;color:#000;white-space:pre;right:972.30px;transform-origin:100% 50%;">618 321,91</span>
<span style="position:absolute;top:716.73px;line-height:16px;font-size:12.60px;font-weight:bold;font-style:normal;color:#000;white-space:pre;right:860.30px;transform-origin:100% 50%;">190 555,79</span>
<span style="position:absolute;top:716.73px;line-height:16px;font-size:12.60px;font-weight:bold;font-style:normal;color:#000;white-space:pre;right:748.30px;transform-origin:100% 50%;">586 068,04</span>
<span style="position:absolute;top:716.73px;line-height:16px;font-size:12.60px;font-weight:bold;font-style:normal;color:#000;white-space:pre;right:636.30px;transform-origin:100% 50%;">689 261,71</span>
<span style="position:absolute;top:716.73px;line-height:16px;font-size:12.60px;font-weight:bold;font-style:normal;color:#000;white-space:pre;right:524.30px;transform-origin:100% 50%;">350 751,27</span>
<div style="position:absolute;left:167.00px;top:738.00px;width:536.00px;height:21.00px;background:#fff;"></div>
<div style="position:absolute;left:727.00px;top:738.00px;width:694.00px;height:21.00px;background:#fff;"></div>
<div style="position:absolute;left:167.00px;top:759.00px;width:536.00px;height:1.00px;background:#d4d4d4;"></div>
<div style="position:absolute;left:727.00px;top:759.00px;width:694.00px;height:1.00px;background:#d4d4d4;"></div>
<div style="position:absolute;left:166.00px;top:738.00px;width:1.00px;height:22.00px;background:#d4d4d4;"></div>
<div style="position:absolute;left:726.00px;top:738.00px;width:1.00px;height:22.00px;background:#d4d4d4;"></div>
<div style="position:absolute;left:838.00px;top:738.00px;width:1.00px;height:22.00px;background:#d4d4d4;"></div>
<div style="position:absolute;left:950.00px;top:738.00px;width:1.00px;height:22.00px;background:#d4d4d4;"></div>
<div style="position:absolute;left:1062.00px;top:738.00px;width:1.00px;height:22.00px;background:#d4d4d4;"></div>
<div style="position:absolute;left:1174.00px;top:738.00px;width:1.00px;height:22.00px;background:#d4d4d4;"></div>
<div style="position:absolute;left:1286.00px;top:738.00px;width:1.00px;height:22.00px;background:#d4d4d4;"></div>
<div style="position:absolute;left:1398.00px;top:738.00px;width:1.00px;height:22.00px;background:#d4d4d4;"></div>
<div style="position:absolute;left:167px;top:738px;width:109px;height:21px;overflow:hidden">
<span style="position:absolute;top:2.54px;line-height:15px;font-size:12.30px;font-weight:normal;font-style:normal;color:#000;white-space:pre;left:1.70px;transform-origin:0 50%;transform:scaleX(1.0037);">G101</span>
</div>
<span style="position:absolute;top:740.54px;line-height:15px;font-size:12.30px;font-weight:normal;font-style:normal;color:#000;white-space:pre;left:278.70px;transform-origin:0 50%;transform:scaleX(1.0165);">Wynagrodzenie zasadnicze razem</span>
<span style="position:absolute;top:740.24px;line-height:15px;font-size:12.30px;font-weight:normal;font-style:normal;color:#000;white-space:pre;right:1084.30px;transform-origin:100% 50%;transform:scaleX(1.0200);">3 321 122,68</span>
<span style="position:absolute;top:740.24px;line-height:15px;font-size:12.30px;font-weight:normal;font-style:normal;color:#000;white-space:pre;right:972.30px;transform-origin:100% 50%;transform:scaleX(1.0200);">559 158,59</span>
<span style="position:absolute;top:740.24px;line-height:15px;font-size:12.30px;font-weight:normal;font-style:normal;color:#000;white-space:pre;right:860.30px;transform-origin:100% 50%;transform:scaleX(1.0200);">184 167,57</span>
<span style="position:absolute;top:740.24px;line-height:15px;font-size:12.30px;font-weight:normal;font-style:normal;color:#000;white-space:pre;right:748.30px;transform-origin:100% 50%;transform:scaleX(1.0200);">577 163,16</span>
<span style="position:absolute;top:740.24px;line-height:15px;font-size:12.30px;font-weight:normal;font-style:normal;color:#000;white-space:pre;right:636.30px;transform-origin:100% 50%;transform:scaleX(1.0200);">682 860,76</span>
<span style="position:absolute;top:740.24px;line-height:15px;font-size:12.30px;font-weight:normal;font-style:normal;color:#000;white-space:pre;right:524.30px;transform-origin:100% 50%;transform:scaleX(1.0200);">336 139,70</span>
<div style="position:absolute;left:167.00px;top:760.00px;width:536.00px;height:21.00px;background:#fff;"></div>
<div style="position:absolute;left:727.00px;top:760.00px;width:694.00px;height:21.00px;background:#fff;"></div>
<div style="position:absolute;left:167.00px;top:781.00px;width:536.00px;height:1.00px;background:#d4d4d4;"></div>
<div style="position:absolute;left:727.00px;top:781.00px;width:694.00px;height:1.00px;background:#d4d4d4;"></div>
<div style="position:absolute;left:166.00px;top:760.00px;width:1.00px;height:22.00px;background:#d4d4d4;"></div>
<div style="position:absolute;left:726.00px;top:760.00px;width:1.00px;height:22.00px;background:#d4d4d4;"></div>
<div style="position:absolute;left:838.00px;top:760.00px;width:1.00px;height:22.00px;background:#d4d4d4;"></div>
<div style="position:absolute;left:950.00px;top:760.00px;width:1.00px;height:22.00px;background:#d4d4d4;"></div>
<div style="position:absolute;left:1062.00px;top:760.00px;width:1.00px;height:22.00px;background:#d4d4d4;"></div>
<div style="position:absolute;left:1174.00px;top:760.00px;width:1.00px;height:22.00px;background:#d4d4d4;"></div>
<div style="position:absolute;left:1286.00px;top:760.00px;width:1.00px;height:22.00px;background:#d4d4d4;"></div>
<div style="position:absolute;left:1398.00px;top:760.00px;width:1.00px;height:22.00px;background:#d4d4d4;"></div>
<div style="position:absolute;left:167px;top:760px;width:109px;height:21px;overflow:hidden">
<span style="position:absolute;top:2.54px;line-height:15px;font-size:12.30px;font-weight:normal;font-style:normal;color:#000;white-space:pre;left:1.70px;transform-origin:0 50%;transform:scaleX(1.0037);">G102</span>
</div>
<span style="position:absolute;top:762.54px;line-height:15px;font-size:12.30px;font-weight:normal;font-style:normal;color:#000;white-space:pre;left:278.70px;transform-origin:0 50%;transform:scaleX(1.0238);">Wynagrodzenie nocne</span>
<span style="position:absolute;top:762.24px;line-height:15px;font-size:12.30px;font-weight:normal;font-style:normal;color:#000;white-space:pre;right:1084.30px;transform-origin:100% 50%;transform:scaleX(1.0200);">69 748,94</span>
<span style="position:absolute;top:762.24px;line-height:15px;font-size:12.30px;font-weight:normal;font-style:normal;color:#000;white-space:pre;right:972.30px;transform-origin:100% 50%;transform:scaleX(1.0200);">58 141,82</span>
<span style="position:absolute;top:762.24px;line-height:15px;font-size:12.30px;font-weight:normal;font-style:normal;color:#000;white-space:pre;right:860.30px;transform-origin:100% 50%;transform:scaleX(1.0200);">4 288,28</span>
<span style="position:absolute;top:762.24px;line-height:15px;font-size:12.30px;font-weight:normal;font-style:normal;color:#000;white-space:pre;right:748.30px;transform-origin:100% 50%;transform:scaleX(1.0200);">4 944,40</span>
<span style="position:absolute;top:762.24px;line-height:15px;font-size:12.30px;font-weight:normal;font-style:normal;color:#000;white-space:pre;right:636.30px;transform-origin:100% 50%;transform:scaleX(1.0200);">857,28</span>
<span style="position:absolute;top:762.24px;line-height:15px;font-size:12.30px;font-weight:normal;font-style:normal;color:#000;white-space:pre;right:524.30px;transform-origin:100% 50%;transform:scaleX(1.0200);">486,92</span>
<div style="position:absolute;left:167.00px;top:782.00px;width:536.00px;height:21.00px;background:#fff;"></div>
<div style="position:absolute;left:727.00px;top:782.00px;width:694.00px;height:21.00px;background:#fff;"></div>
<div style="position:absolute;left:167.00px;top:803.00px;width:536.00px;height:1.00px;background:#d4d4d4;"></div>
<div style="position:absolute;left:727.00px;top:803.00px;width:694.00px;height:1.00px;background:#d4d4d4;"></div>
<div style="position:absolute;left:166.00px;top:782.00px;width:1.00px;height:22.00px;background:#d4d4d4;"></div>
<div style="position:absolute;left:726.00px;top:782.00px;width:1.00px;height:22.00px;background:#d4d4d4;"></div>
<div style="position:absolute;left:838.00px;top:782.00px;width:1.00px;height:22.00px;background:#d4d4d4;"></div>
<div style="position:absolute;left:950.00px;top:782.00px;width:1.00px;height:22.00px;background:#d4d4d4;"></div>
<div style="position:absolute;left:1062.00px;top:782.00px;width:1.00px;height:22.00px;background:#d4d4d4;"></div>
<div style="position:absolute;left:1174.00px;top:782.00px;width:1.00px;height:22.00px;background:#d4d4d4;"></div>
<div style="position:absolute;left:1286.00px;top:782.00px;width:1.00px;height:22.00px;background:#d4d4d4;"></div>
<div style="position:absolute;left:1398.00px;top:782.00px;width:1.00px;height:22.00px;background:#d4d4d4;"></div>
<div style="position:absolute;left:167px;top:782px;width:109px;height:21px;overflow:hidden">
<span style="position:absolute;top:2.54px;line-height:15px;font-size:12.30px;font-weight:normal;font-style:normal;color:#000;white-space:pre;left:1.70px;transform-origin:0 50%;transform:scaleX(1.0037);">G103</span>
</div>
<span style="position:absolute;top:784.54px;line-height:15px;font-size:12.30px;font-weight:normal;font-style:normal;color:#000;white-space:pre;left:278.70px;transform-origin:0 50%;transform:scaleX(1.0336);">Wynagrodzenie postojowe</span>
<div style="position:absolute;left:167.00px;top:804.00px;width:536.00px;height:21.00px;background:#fff;"></div>
<div style="position:absolute;left:727.00px;top:804.00px;width:694.00px;height:21.00px;background:#fff;"></div>
<div style="position:absolute;left:167.00px;top:825.00px;width:536.00px;height:1.00px;background:#d4d4d4;"></div>
<div style="position:absolute;left:727.00px;top:825.00px;width:694.00px;height:1.00px;background:#d4d4d4;"></div>
<div style="position:absolute;left:166.00px;top:804.00px;width:1.00px;height:22.00px;background:#d4d4d4;"></div>
<div style="position:absolute;left:726.00px;top:804.00px;width:1.00px;height:22.00px;background:#d4d4d4;"></div>
<div style="position:absolute;left:838.00px;top:804.00px;width:1.00px;height:22.00px;background:#d4d4d4;"></div>
<div style="position:absolute;left:950.00px;top:804.00px;width:1.00px;height:22.00px;background:#d4d4d4;"></div>
<div style="position:absolute;left:1062.00px;top:804.00px;width:1.00px;height:22.00px;background:#d4d4d4;"></div>
<div style="position:absolute;left:1174.00px;top:804.00px;width:1.00px;height:22.00px;background:#d4d4d4;"></div>
<div style="position:absolute;left:1286.00px;top:804.00px;width:1.00px;height:22.00px;background:#d4d4d4;"></div>
<div style="position:absolute;left:1398.00px;top:804.00px;width:1.00px;height:22.00px;background:#d4d4d4;"></div>
<div style="position:absolute;left:167px;top:804px;width:109px;height:21px;overflow:hidden">
<span style="position:absolute;top:2.54px;line-height:15px;font-size:12.30px;font-weight:normal;font-style:normal;color:#000;white-space:pre;left:1.70px;transform-origin:0 50%;transform:scaleX(1.0037);">G104</span>
</div>
<span style="position:absolute;top:806.54px;line-height:15px;font-size:12.30px;font-weight:normal;font-style:normal;color:#000;white-space:pre;left:278.70px;transform-origin:0 50%;transform:scaleX(1.0332);">Wynagrodzenie planowane podwyżki</span>
<div style="position:absolute;left:167.00px;top:826.00px;width:536.00px;height:21.00px;background:#fff;"></div>
<div style="position:absolute;left:727.00px;top:826.00px;width:694.00px;height:21.00px;background:#fff;"></div>
<div style="position:absolute;left:167.00px;top:847.00px;width:536.00px;height:1.00px;background:#d4d4d4;"></div>
<div style="position:absolute;left:727.00px;top:847.00px;width:694.00px;height:1.00px;background:#d4d4d4;"></div>
<div style="position:absolute;left:166.00px;top:826.00px;width:1.00px;height:22.00px;background:#d4d4d4;"></div>
<div style="position:absolute;left:726.00px;top:826.00px;width:1.00px;height:22.00px;background:#d4d4d4;"></div>
<div style="position:absolute;left:838.00px;top:826.00px;width:1.00px;height:22.00px;background:#d4d4d4;"></div>
<div style="position:absolute;left:950.00px;top:826.00px;width:1.00px;height:22.00px;background:#d4d4d4;"></div>
<div style="position:absolute;left:1062.00px;top:826.00px;width:1.00px;height:22.00px;background:#d4d4d4;"></div>
<div style="position:absolute;left:1174.00px;top:826.00px;width:1.00px;height:22.00px;background:#d4d4d4;"></div>
<div style="position:absolute;left:1286.00px;top:826.00px;width:1.00px;height:22.00px;background:#d4d4d4;"></div>
<div style="position:absolute;left:1398.00px;top:826.00px;width:1.00px;height:22.00px;background:#d4d4d4;"></div>
<div style="position:absolute;left:167px;top:826px;width:109px;height:21px;overflow:hidden">
<span style="position:absolute;top:2.54px;line-height:15px;font-size:12.30px;font-weight:normal;font-style:normal;color:#000;white-space:pre;left:1.70px;transform-origin:0 50%;transform:scaleX(1.0037);">G105</span>
</div>
<span style="position:absolute;top:828.54px;line-height:15px;font-size:12.30px;font-weight:normal;font-style:normal;color:#000;white-space:pre;left:278.70px;transform-origin:0 50%;transform:scaleX(0.9935);">Wynagrodzenie UCP</span>
<div style="position:absolute;left:167.00px;top:848.00px;width:536.00px;height:21.00px;background:#fff;"></div>
<div style="position:absolute;left:727.00px;top:848.00px;width:694.00px;height:21.00px;background:#fff;"></div>
<div style="position:absolute;left:167.00px;top:869.00px;width:536.00px;height:1.00px;background:#d4d4d4;"></div>
<div style="position:absolute;left:727.00px;top:869.00px;width:694.00px;height:1.00px;background:#d4d4d4;"></div>
<div style="position:absolute;left:166.00px;top:848.00px;width:1.00px;height:22.00px;background:#d4d4d4;"></div>
<div style="position:absolute;left:726.00px;top:848.00px;width:1.00px;height:22.00px;background:#d4d4d4;"></div>
<div style="position:absolute;left:838.00px;top:848.00px;width:1.00px;height:22.00px;background:#d4d4d4;"></div>
<div style="position:absolute;left:950.00px;top:848.00px;width:1.00px;height:22.00px;background:#d4d4d4;"></div>
<div style="position:absolute;left:1062.00px;top:848.00px;width:1.00px;height:22.00px;background:#d4d4d4;"></div>
<div style="position:absolute;left:1174.00px;top:848.00px;width:1.00px;height:22.00px;background:#d4d4d4;"></div>
<div style="position:absolute;left:1286.00px;top:848.00px;width:1.00px;height:22.00px;background:#d4d4d4;"></div>
<div style="position:absolute;left:1398.00px;top:848.00px;width:1.00px;height:22.00px;background:#d4d4d4;"></div>
<div style="position:absolute;left:167px;top:848px;width:109px;height:21px;overflow:hidden">
<span style="position:absolute;top:2.54px;line-height:15px;font-size:12.30px;font-weight:normal;font-style:normal;color:#000;white-space:pre;left:1.70px;transform-origin:0 50%;transform:scaleX(1.0037);">G106</span>
</div>
<span style="position:absolute;top:850.54px;line-height:15px;font-size:12.30px;font-weight:normal;font-style:normal;color:#000;white-space:pre;left:278.70px;transform-origin:0 50%;transform:scaleX(1.0414);">Ekwiwalent za urlop</span>
<span style="position:absolute;top:850.24px;line-height:15px;font-size:12.30px;font-weight:normal;font-style:normal;color:#000;white-space:pre;right:1084.30px;transform-origin:100% 50%;transform:scaleX(1.0200);">4 781,58</span>
<span style="position:absolute;top:850.24px;line-height:15px;font-size:12.30px;font-weight:normal;font-style:normal;color:#000;white-space:pre;right:860.30px;transform-origin:100% 50%;transform:scaleX(1.0200);">1 571,10</span>
<span style="position:absolute;top:850.24px;line-height:15px;font-size:12.30px;font-weight:normal;font-style:normal;color:#000;white-space:pre;right:748.30px;transform-origin:100% 50%;transform:scaleX(1.0200);">3 210,48</span>
<div style="position:absolute;left:167.00px;top:870.00px;width:536.00px;height:21.00px;background:#fff;"></div>
<div style="position:absolute;left:727.00px;top:870.00px;width:694.00px;height:21.00px;background:#fff;"></div>
<div style="position:absolute;left:167.00px;top:891.00px;width:536.00px;height:1.00px;background:#d4d4d4;"></div>
<div style="position:absolute;left:727.00px;top:891.00px;width:694.00px;height:1.00px;background:#d4d4d4;"></div>
<div style="position:absolute;left:166.00px;top:870.00px;width:1.00px;height:22.00px;background:#d4d4d4;"></div>
<div style="position:absolute;left:726.00px;top:870.00px;width:1.00px;height:22.00px;background:#d4d4d4;"></div>
<div style="position:absolute;left:838.00px;top:870.00px;width:1.00px;height:22.00px;background:#d4d4d4;"></div>
<div style="position:absolute;left:950.00px;top:870.00px;width:1.00px;height:22.00px;background:#d4d4d4;"></div>
<div style="position:absolute;left:1062.00px;top:870.00px;width:1.00px;height:22.00px;background:#d4d4d4;"></div>
<div style="position:absolute;left:1174.00px;top:870.00px;width:1.00px;height:22.00px;background:#d4d4d4;"></div>
<div style="position:absolute;left:1286.00px;top:870.00px;width:1.00px;height:22.00px;background:#d4d4d4;"></div>
<div style="position:absolute;left:1398.00px;top:870.00px;width:1.00px;height:22.00px;background:#d4d4d4;"></div>
<div style="position:absolute;left:167px;top:870px;width:109px;height:21px;overflow:hidden">
<span style="position:absolute;top:2.54px;line-height:15px;font-size:12.30px;font-weight:normal;font-style:normal;color:#000;white-space:pre;left:1.70px;transform-origin:0 50%;transform:scaleX(1.0037);">G107</span>
</div>
<span style="position:absolute;top:872.54px;line-height:15px;font-size:12.30px;font-weight:normal;font-style:normal;color:#000;white-space:pre;left:278.70px;transform-origin:0 50%;transform:scaleX(1.0237);">Nadgodziny</span>
<span style="position:absolute;top:872.24px;line-height:15px;font-size:12.30px;font-weight:normal;font-style:normal;color:#000;white-space:pre;right:1084.30px;transform-origin:100% 50%;transform:scaleX(1.0200);">36 268,66</span>
<span style="position:absolute;top:872.24px;line-height:15px;font-size:12.30px;font-weight:normal;font-style:normal;color:#000;white-space:pre;right:972.30px;transform-origin:100% 50%;transform:scaleX(1.0200);">1 021,50</span>
<span style="position:absolute;top:872.24px;line-height:15px;font-size:12.30px;font-weight:normal;font-style:normal;color:#000;white-space:pre;right:860.30px;transform-origin:100% 50%;transform:scaleX(1.0200);">528,84</span>
<span style="position:absolute;top:872.24px;line-height:15px;font-size:12.30px;font-weight:normal;font-style:normal;color:#000;white-space:pre;right:748.30px;transform-origin:100% 50%;transform:scaleX(1.0200);">750,00</span>
<span style="position:absolute;top:872.24px;line-height:15px;font-size:12.30px;font-weight:normal;font-style:normal;color:#000;white-space:pre;right:636.30px;transform-origin:100% 50%;transform:scaleX(1.0200);">5 543,67</span>
<span style="position:absolute;top:872.24px;line-height:15px;font-size:12.30px;font-weight:normal;font-style:normal;color:#000;white-space:pre;right:524.30px;transform-origin:100% 50%;transform:scaleX(1.0200);">14 124,65</span>
<div style="position:absolute;left:167.00px;top:892.00px;width:536.00px;height:21.00px;background:#f2f2f2;"></div>
<div style="position:absolute;left:727.00px;top:892.00px;width:694.00px;height:21.00px;background:#f2f2f2;"></div>
<div style="position:absolute;left:167.00px;top:913.00px;width:536.00px;height:1.00px;background:#d4d4d4;"></div>
<div style="position:absolute;left:727.00px;top:913.00px;width:694.00px;height:1.00px;background:#d4d4d4;"></div>
<div style="position:absolute;left:166.00px;top:892.00px;width:1.00px;height:22.00px;background:#d4d4d4;"></div>
<div style="position:absolute;left:726.00px;top:892.00px;width:1.00px;height:22.00px;background:#d4d4d4;"></div>
<div style="position:absolute;left:838.00px;top:892.00px;width:1.00px;height:22.00px;background:#d4d4d4;"></div>
<div style="position:absolute;left:950.00px;top:892.00px;width:1.00px;height:22.00px;background:#d4d4d4;"></div>
<div style="position:absolute;left:1062.00px;top:892.00px;width:1.00px;height:22.00px;background:#d4d4d4;"></div>
<div style="position:absolute;left:1174.00px;top:892.00px;width:1.00px;height:22.00px;background:#d4d4d4;"></div>
<div style="position:absolute;left:1286.00px;top:892.00px;width:1.00px;height:22.00px;background:#d4d4d4;"></div>
<div style="position:absolute;left:1398.00px;top:892.00px;width:1.00px;height:22.00px;background:#d4d4d4;"></div>
<div style="position:absolute;left:167px;top:892px;width:109px;height:21px;overflow:hidden">
<span style="position:absolute;top:1.93px;line-height:16px;font-size:12.60px;font-weight:bold;font-style:normal;color:#000;white-space:pre;left:1.70px;transform-origin:0 50%;transform:scaleX(0.9867);">G20</span>
</div>
<span style="position:absolute;top:893.93px;line-height:16px;font-size:12.60px;font-weight:bold;font-style:normal;color:#000;white-space:pre;left:278.70px;transform-origin:0 50%;transform:scaleX(0.9565);">Premie</span>
<span style="position:absolute;top:892.73px;line-height:16px;font-size:12.60px;font-weight:bold;font-style:normal;color:#000;white-space:pre;right:1084.30px;transform-origin:100% 50%;">762 789,03</span>
<span style="position:absolute;top:892.73px;line-height:16px;font-size:12.60px;font-weight:bold;font-style:normal;color:#000;white-space:pre;right:972.30px;transform-origin:100% 50%;">163 979,42</span>
<span style="position:absolute;top:892.73px;line-height:16px;font-size:12.60px;font-weight:bold;font-style:normal;color:#000;white-space:pre;right:860.30px;transform-origin:100% 50%;">24 801,90</span>
<span style="position:absolute;top:892.73px;line-height:16px;font-size:12.60px;font-weight:bold;font-style:normal;color:#000;white-space:pre;right:748.30px;transform-origin:100% 50%;">170 206,39</span>
<span style="position:absolute;top:892.73px;line-height:16px;font-size:12.60px;font-weight:bold;font-style:normal;color:#000;white-space:pre;right:636.30px;transform-origin:100% 50%;">319 012,63</span>
<span style="position:absolute;top:892.73px;line-height:16px;font-size:12.60px;font-weight:bold;font-style:normal;color:#000;white-space:pre;right:524.30px;transform-origin:100% 50%;">36 760,04</span>
<div style="position:absolute;left:167.00px;top:914.00px;width:536.00px;height:21.00px;background:#f2f2f2;"></div>
<div style="position:absolute;left:727.00px;top:914.00px;width:694.00px;height:21.00px;background:#f2f2f2;"></div>
<div style="position:absolute;left:167.00px;top:935.00px;width:536.00px;height:1.00px;background:#d4d4d4;"></div>
<div style="position:absolute;left:727.00px;top:935.00px;width:694.00px;height:1.00px;background:#d4d4d4;"></div>
<div style="position:absolute;left:166.00px;top:914.00px;width:1.00px;height:22.00px;background:#d4d4d4;"></div>
<div style="position:absolute;left:726.00px;top:914.00px;width:1.00px;height:22.00px;background:#d4d4d4;"></div>
<div style="position:absolute;left:838.00px;top:914.00px;width:1.00px;height:22.00px;background:#d4d4d4;"></div>
<div style="position:absolute;left:950.00px;top:914.00px;width:1.00px;height:22.00px;background:#d4d4d4;"></div>
<div style="position:absolute;left:1062.00px;top:914.00px;width:1.00px;height:22.00px;background:#d4d4d4;"></div>
<div style="position:absolute;left:1174.00px;top:914.00px;width:1.00px;height:22.00px;background:#d4d4d4;"></div>
<div style="position:absolute;left:1286.00px;top:914.00px;width:1.00px;height:22.00px;background:#d4d4d4;"></div>
<div style="position:absolute;left:1398.00px;top:914.00px;width:1.00px;height:22.00px;background:#d4d4d4;"></div>
<div style="position:absolute;left:167px;top:914px;width:109px;height:21px;overflow:hidden">
<span style="position:absolute;top:1.93px;line-height:16px;font-size:12.60px;font-weight:bold;font-style:normal;color:#000;white-space:pre;left:1.70px;transform-origin:0 50%;transform:scaleX(0.9867);">G21</span>
</div>
<span style="position:absolute;top:915.93px;line-height:16px;font-size:12.60px;font-weight:bold;font-style:normal;color:#000;white-space:pre;left:278.70px;transform-origin:0 50%;transform:scaleX(1.0077);">Nagrody</span>
<span style="position:absolute;top:914.73px;line-height:16px;font-size:12.60px;font-weight:bold;font-style:normal;color:#000;white-space:pre;right:1084.30px;transform-origin:100% 50%;">130 402,47</span>
<span style="position:absolute;top:914.73px;line-height:16px;font-size:12.60px;font-weight:bold;font-style:normal;color:#000;white-space:pre;right:972.30px;transform-origin:100% 50%;">61 015,00</span>
<span style="position:absolute;top:914.73px;line-height:16px;font-size:12.60px;font-weight:bold;font-style:normal;color:#000;white-space:pre;right:860.30px;transform-origin:100% 50%;">13 185,00</span>
<span style="position:absolute;top:914.73px;line-height:16px;font-size:12.60px;font-weight:bold;font-style:normal;color:#000;white-space:pre;right:748.30px;transform-origin:100% 50%;">18 873,00</span>
<span style="position:absolute;top:914.73px;line-height:16px;font-size:12.60px;font-weight:bold;font-style:normal;color:#000;white-space:pre;right:636.30px;transform-origin:100% 50%;">21 336,71</span>
<span style="position:absolute;top:914.73px;line-height:16px;font-size:12.60px;font-weight:bold;font-style:normal;color:#000;white-space:pre;right:524.30px;transform-origin:100% 50%;">3 355,00</span>
<div style="position:absolute;left:167.00px;top:936.00px;width:536.00px;height:21.00px;background:#f2f2f2;"></div>
<div style="position:absolute;left:727.00px;top:936.00px;width:694.00px;height:21.00px;background:#f2f2f2;"></div>
<div style="position:absolute;left:167.00px;top:957.00px;width:536.00px;height:1.00px;background:#d4d4d4;"></div>
<div style="position:absolute;left:727.00px;top:957.00px;width:694.00px;height:1.00px;background:#d4d4d4;"></div>
<div style="position:absolute;left:166.00px;top:936.00px;width:1.00px;height:22.00px;background:#d4d4d4;"></div>
<div style="position:absolute;left:726.00px;top:936.00px;width:1.00px;height:22.00px;background:#d4d4d4;"></div>
<div style="position:absolute;left:838.00px;top:936.00px;width:1.00px;height:22.00px;background:#d4d4d4;"></div>
<div style="position:absolute;left:950.00px;top:936.00px;width:1.00px;height:22.00px;background:#d4d4d4;"></div>
<div style="position:absolute;left:1062.00px;top:936.00px;width:1.00px;height:22.00px;background:#d4d4d4;"></div>
<div style="position:absolute;left:1174.00px;top:936.00px;width:1.00px;height:22.00px;background:#d4d4d4;"></div>
<div style="position:absolute;left:1286.00px;top:936.00px;width:1.00px;height:22.00px;background:#d4d4d4;"></div>
<div style="position:absolute;left:1398.00px;top:936.00px;width:1.00px;height:22.00px;background:#d4d4d4;"></div>
<div style="position:absolute;left:167px;top:936px;width:109px;height:21px;overflow:hidden">
<span style="position:absolute;top:1.93px;line-height:16px;font-size:12.60px;font-weight:bold;font-style:normal;color:#000;white-space:pre;left:1.70px;transform-origin:0 50%;transform:scaleX(0.9867);">G30</span>
</div>
<span style="position:absolute;top:937.93px;line-height:16px;font-size:12.60px;font-weight:bold;font-style:normal;color:#000;white-space:pre;left:278.70px;transform-origin:0 50%;transform:scaleX(0.9557);">Składniki ZUS</span>
<span style="position:absolute;top:936.73px;line-height:16px;font-size:12.60px;font-weight:bold;font-style:normal;color:#000;white-space:pre;right:1084.30px;transform-origin:100% 50%;">860 518,64</span>
<span style="position:absolute;top:936.73px;line-height:16px;font-size:12.60px;font-weight:bold;font-style:normal;color:#000;white-space:pre;right:972.30px;transform-origin:100% 50%;">167 650,50</span>
<span style="position:absolute;top:936.73px;line-height:16px;font-size:12.60px;font-weight:bold;font-style:normal;color:#000;white-space:pre;right:860.30px;transform-origin:100% 50%;">44 994,75</span>
<span style="position:absolute;top:936.73px;line-height:16px;font-size:12.60px;font-weight:bold;font-style:normal;color:#000;white-space:pre;right:748.30px;transform-origin:100% 50%;">153 403,79</span>
<span style="position:absolute;top:936.73px;line-height:16px;font-size:12.60px;font-weight:bold;font-style:normal;color:#000;white-space:pre;right:636.30px;transform-origin:100% 50%;">208 885,42</span>
<span style="position:absolute;top:936.73px;line-height:16px;font-size:12.60px;font-weight:bold;font-style:normal;color:#000;white-space:pre;right:524.30px;transform-origin:100% 50%;">78 780,80</span>
<div style="position:absolute;left:167.00px;top:958.00px;width:536.00px;height:21.00px;background:#f2f2f2;"></div>
<div style="position:absolute;left:727.00px;top:958.00px;width:694.00px;height:21.00px;background:#f2f2f2;"></div>
<div style="position:absolute;left:167.00px;top:979.00px;width:536.00px;height:1.00px;background:#d4d4d4;"></div>
<div style="position:absolute;left:727.00px;top:979.00px;width:694.00px;height:1.00px;background:#d4d4d4;"></div>
<div style="position:absolute;left:166.00px;top:958.00px;width:1.00px;height:22.00px;background:#d4d4d4;"></div>
<div style="position:absolute;left:726.00px;top:958.00px;width:1.00px;height:22.00px;background:#d4d4d4;"></div>
<div style="position:absolute;left:838.00px;top:958.00px;width:1.00px;height:22.00px;background:#d4d4d4;"></div>
<div style="position:absolute;left:950.00px;top:958.00px;width:1.00px;height:22.00px;background:#d4d4d4;"></div>
<div style="position:absolute;left:1062.00px;top:958.00px;width:1.00px;height:22.00px;background:#d4d4d4;"></div>
<div style="position:absolute;left:1174.00px;top:958.00px;width:1.00px;height:22.00px;background:#d4d4d4;"></div>
<div style="position:absolute;left:1286.00px;top:958.00px;width:1.00px;height:22.00px;background:#d4d4d4;"></div>
<div style="position:absolute;left:1398.00px;top:958.00px;width:1.00px;height:22.00px;background:#d4d4d4;"></div>
<div style="position:absolute;left:167px;top:958px;width:109px;height:21px;overflow:hidden">
<span style="position:absolute;top:1.93px;line-height:16px;font-size:12.60px;font-weight:bold;font-style:normal;color:#000;white-space:pre;left:1.70px;transform-origin:0 50%;transform:scaleX(0.9867);">G40</span>
</div>
<span style="position:absolute;top:959.93px;line-height:16px;font-size:12.60px;font-weight:bold;font-style:normal;color:#000;white-space:pre;left:278.70px;transform-origin:0 50%;transform:scaleX(0.8607);">PPK</span>
<span style="position:absolute;top:958.73px;line-height:16px;font-size:12.60px;font-weight:bold;font-style:normal;color:#000;white-space:pre;right:1084.30px;transform-origin:100% 50%;">23 143,93</span>
<span style="position:absolute;top:958.73px;line-height:16px;font-size:12.60px;font-weight:bold;font-style:normal;color:#000;white-space:pre;right:972.30px;transform-origin:100% 50%;">1 987,86</span>
<span style="position:absolute;top:958.73px;line-height:16px;font-size:12.60px;font-weight:bold;font-style:normal;color:#000;white-space:pre;right:860.30px;transform-origin:100% 50%;">870,45</span>
<span style="position:absolute;top:958.73px;line-height:16px;font-size:12.60px;font-weight:bold;font-style:normal;color:#000;white-space:pre;right:748.30px;transform-origin:100% 50%;">4 120,99</span>
<span style="position:absolute;top:958.73px;line-height:16px;font-size:12.60px;font-weight:bold;font-style:normal;color:#000;white-space:pre;right:636.30px;transform-origin:100% 50%;">7 775,45</span>
<span style="position:absolute;top:958.73px;line-height:16px;font-size:12.60px;font-weight:bold;font-style:normal;color:#000;white-space:pre;right:524.30px;transform-origin:100% 50%;">1 376,50</span>
</div>
<div style="position:absolute;left:0.00px;top:407.00px;width:1421.00px;height:1.00px;background:#9b9b9b;"></div>
<div style="position:absolute;left:703.00px;top:218.00px;width:1.00px;height:756.00px;background:#9b9b9b;"></div>
<div style="position:absolute;left:1420.00px;top:218.00px;width:1.00px;height:756.00px;background:#b5b5b5;"></div>
<div style="position:absolute;left:0;top:0;width:110px;height:974px;overflow:hidden">
<div style="position:absolute;left:9.00px;top:429.00px;width:2.00px;height:262.00px;background:#9a9a9a;"></div>
<div style="position:absolute;left:9.00px;top:689.50px;width:6.00px;height:1.50px;background:#9a9a9a;"></div>
<div style="position:absolute;left:9.00px;top:715.00px;width:2.00px;height:264.00px;background:#9a9a9a;"></div>
<div style="position:absolute;left:30.00px;top:495.00px;width:2.00px;height:174.00px;background:#9a9a9a;"></div>
<div style="position:absolute;left:30.00px;top:667.50px;width:6.00px;height:1.50px;background:#9a9a9a;"></div>
<div style="position:absolute;left:30.00px;top:737.00px;width:2.00px;height:152.00px;background:#9a9a9a;"></div>
<div style="position:absolute;left:30.00px;top:887.50px;width:6.00px;height:1.50px;background:#9a9a9a;"></div>
<div style="position:absolute;left:51.00px;top:539.00px;width:2.00px;height:42.00px;background:#9a9a9a;"></div>
<div style="position:absolute;left:51.00px;top:579.50px;width:6.00px;height:1.50px;background:#9a9a9a;"></div>
<div style="position:absolute;left:51.00px;top:605.00px;width:2.00px;height:64.00px;background:#9a9a9a;"></div>
<div style="position:absolute;left:51.00px;top:667.50px;width:6.00px;height:1.50px;background:#9a9a9a;"></div>
<div style="position:absolute;left:2.00px;top:408.00px;width:21.00px;height:21.00px;background:#e6e6e6;border:1px solid #8e8e8e;box-sizing:border-box;"></div>
<div style="position:absolute;left:8.50px;top:417.50px;width:9.00px;height:2.00px;background:#5e5e5e;"></div>
<div style="position:absolute;left:2.00px;top:694.00px;width:21.00px;height:21.00px;background:#e6e6e6;border:1px solid #8e8e8e;box-sizing:border-box;"></div>
<div style="position:absolute;left:8.50px;top:703.50px;width:9.00px;height:2.00px;background:#5e5e5e;"></div>
<div style="position:absolute;left:23.00px;top:430.00px;width:21.00px;height:21.00px;background:#e6e6e6;border:1px solid #8e8e8e;box-sizing:border-box;"></div>
<div style="position:absolute;left:29.50px;top:439.50px;width:9.00px;height:2.00px;background:#5e5e5e;"></div>
<div style="position:absolute;left:33.00px;top:436.00px;width:2.00px;height:9.00px;background:#5e5e5e;"></div>
<div style="position:absolute;left:23.00px;top:452.00px;width:21.00px;height:21.00px;background:#e6e6e6;border:1px solid #8e8e8e;box-sizing:border-box;"></div>
<div style="position:absolute;left:29.50px;top:461.50px;width:9.00px;height:2.00px;background:#5e5e5e;"></div>
<div style="position:absolute;left:33.00px;top:458.00px;width:2.00px;height:9.00px;background:#5e5e5e;"></div>
<div style="position:absolute;left:23.00px;top:672.00px;width:21.00px;height:21.00px;background:#e6e6e6;border:1px solid #8e8e8e;box-sizing:border-box;"></div>
<div style="position:absolute;left:29.50px;top:681.50px;width:9.00px;height:2.00px;background:#5e5e5e;"></div>
<div style="position:absolute;left:33.00px;top:678.00px;width:2.00px;height:9.00px;background:#5e5e5e;"></div>
<div style="position:absolute;left:23.00px;top:892.00px;width:21.00px;height:21.00px;background:#e6e6e6;border:1px solid #8e8e8e;box-sizing:border-box;"></div>
<div style="position:absolute;left:29.50px;top:901.50px;width:9.00px;height:2.00px;background:#5e5e5e;"></div>
<div style="position:absolute;left:33.00px;top:898.00px;width:2.00px;height:9.00px;background:#5e5e5e;"></div>
<div style="position:absolute;left:23.00px;top:914.00px;width:21.00px;height:21.00px;background:#e6e6e6;border:1px solid #8e8e8e;box-sizing:border-box;"></div>
<div style="position:absolute;left:29.50px;top:923.50px;width:9.00px;height:2.00px;background:#5e5e5e;"></div>
<div style="position:absolute;left:33.00px;top:920.00px;width:2.00px;height:9.00px;background:#5e5e5e;"></div>
<div style="position:absolute;left:23.00px;top:936.00px;width:21.00px;height:21.00px;background:#e6e6e6;border:1px solid #8e8e8e;box-sizing:border-box;"></div>
<div style="position:absolute;left:29.50px;top:945.50px;width:9.00px;height:2.00px;background:#5e5e5e;"></div>
<div style="position:absolute;left:33.00px;top:942.00px;width:2.00px;height:9.00px;background:#5e5e5e;"></div>
<div style="position:absolute;left:23.00px;top:958.00px;width:21.00px;height:21.00px;background:#e6e6e6;border:1px solid #8e8e8e;box-sizing:border-box;"></div>
<div style="position:absolute;left:29.50px;top:967.50px;width:9.00px;height:2.00px;background:#5e5e5e;"></div>
<div style="position:absolute;left:33.00px;top:964.00px;width:2.00px;height:9.00px;background:#5e5e5e;"></div>
<div style="position:absolute;left:23.00px;top:474.00px;width:21.00px;height:21.00px;background:#e6e6e6;border:1px solid #8e8e8e;box-sizing:border-box;"></div>
<div style="position:absolute;left:29.50px;top:483.50px;width:9.00px;height:2.00px;background:#5e5e5e;"></div>
<div style="position:absolute;left:23.00px;top:716.00px;width:21.00px;height:21.00px;background:#e6e6e6;border:1px solid #8e8e8e;box-sizing:border-box;"></div>
<div style="position:absolute;left:29.50px;top:725.50px;width:9.00px;height:2.00px;background:#5e5e5e;"></div>
<div style="position:absolute;left:51.50px;top:506.00px;width:2.00px;height:2.00px;background:#8a8a8a;"></div>
<div style="position:absolute;left:44.00px;top:518.00px;width:21.00px;height:21.00px;background:#e6e6e6;border:1px solid #8e8e8e;box-sizing:border-box;"></div>
<div style="position:absolute;left:50.50px;top:527.50px;width:9.00px;height:2.00px;background:#5e5e5e;"></div>
<div style="position:absolute;left:44.00px;top:584.00px;width:21.00px;height:21.00px;background:#e6e6e6;border:1px solid #8e8e8e;box-sizing:border-box;"></div>
<div style="position:absolute;left:50.50px;top:593.50px;width:9.00px;height:2.00px;background:#5e5e5e;"></div>
<div style="position:absolute;left:44.00px;top:738.00px;width:21.00px;height:21.00px;background:#e6e6e6;border:1px solid #8e8e8e;box-sizing:border-box;"></div>
<div style="position:absolute;left:50.50px;top:747.50px;width:9.00px;height:2.00px;background:#5e5e5e;"></div>
<div style="position:absolute;left:54.00px;top:744.00px;width:2.00px;height:9.00px;background:#5e5e5e;"></div>
<div style="position:absolute;left:51.50px;top:770.00px;width:2.00px;height:2.00px;background:#8a8a8a;"></div>
<div style="position:absolute;left:51.50px;top:792.00px;width:2.00px;height:2.00px;background:#8a8a8a;"></div>
<div style="position:absolute;left:51.50px;top:814.00px;width:2.00px;height:2.00px;background:#8a8a8a;"></div>
<div style="position:absolute;left:51.50px;top:836.00px;width:2.00px;height:2.00px;background:#8a8a8a;"></div>
<div style="position:absolute;left:51.50px;top:858.00px;width:2.00px;height:2.00px;background:#8a8a8a;"></div>
<div style="position:absolute;left:51.50px;top:880.00px;width:2.00px;height:2.00px;background:#8a8a8a;"></div>
<div style="position:absolute;left:65.00px;top:540.00px;width:21.00px;height:21.00px;background:#e6e6e6;border:1px solid #8e8e8e;box-sizing:border-box;"></div>
<div style="position:absolute;left:71.50px;top:549.50px;width:9.00px;height:2.00px;background:#5e5e5e;"></div>
<div style="position:absolute;left:75.00px;top:546.00px;width:2.00px;height:9.00px;background:#5e5e5e;"></div>
<div style="position:absolute;left:72.50px;top:572.00px;width:2.00px;height:2.00px;background:#8a8a8a;"></div>
<div style="position:absolute;left:72.50px;top:616.00px;width:2.00px;height:2.00px;background:#8a8a8a;"></div>
<div style="position:absolute;left:72.50px;top:638.00px;width:2.00px;height:2.00px;background:#8a8a8a;"></div>
<div style="position:absolute;left:72.50px;top:660.00px;width:2.00px;height:2.00px;background:#8a8a8a;"></div>
</div>
<div style="position:absolute;left:1424.00px;top:198.00px;width:19.00px;height:776.00px;background:#f1f1f1;"></div>
<div style="position:absolute;left:1424.00px;top:198.00px;width:19.00px;height:19.00px;background:#fff;border:1px solid #a6a6a6;box-sizing:border-box;"></div>
<svg style="position:absolute;left:1427.50px;top:201.50px" width="12" height="9" viewBox="0 0 12 9"><path d="M1.300 7.700L6 2.300l4.700 5.400z" fill="#222"/></svg>
<div style="position:absolute;left:1424.00px;top:217.00px;width:19.00px;height:21.00px;background:#fff;border:1px solid #a6a6a6;box-sizing:border-box;"></div>
<div style="position:absolute;left:1424.00px;top:954.00px;width:19.00px;height:20.00px;background:#fff;border:1px solid #a6a6a6;box-sizing:border-box;"></div>
<svg style="position:absolute;left:1427.50px;top:960.00px" width="12" height="9" viewBox="0 0 12 9"><path d="M1.500 1.800L6 6.800l4.500-5z" fill="#222"/></svg>
<div style="position:absolute;left:1446.00px;top:197.00px;width:1.00px;height:806.00px;background:#c6c6c6;"></div>
<div style="position:absolute;left:1454.00px;top:244.00px;width:458.00px;height:752.00px;background:#fff;"></div>
<svg style="position:absolute;left:1830.00px;top:216.00px" width="22" height="14" viewBox="0 0 22 14"><path d="M2 3l8.500 8.500L19 3" fill="none" stroke="#333" stroke-width="1.300"/></svg>
<svg style="position:absolute;left:1884.00px;top:215.00px" width="16" height="16" viewBox="0 0 16 16"><path d="M2 2l12.500 12.500M14.500 2L2 14.500" stroke="#333" stroke-width="1.400"/></svg>
<svg style="position:absolute;left:1463.20px;top:250.90px" width="40" height="40" viewBox="-0.4 -0.4 40.8 40.8"><path d="M31.96 5.75 A18.6 18.6 0 0 1 20.00 38.60 L20.00 28.30 A8.3 8.3 0 0 0 25.34 13.64 Z" fill="#6aae8e"/><path d="M20.00 38.60 A18.6 18.6 0 0 1 8.55 34.66 L14.89 26.54 A8.3 8.3 0 0 0 20.00 28.30 Z" fill="#78c8a8"/><path d="M7.08 33.38 A18.6 18.6 0 0 1 1.41 20.65 L11.71 20.29 A8.3 8.3 0 0 0 14.23 25.97 Z" fill="#4a6286"/><path d="M1.45 18.70 A18.6 18.6 0 0 1 20.00 1.40 L20.00 11.70 A8.3 8.3 0 0 0 11.72 19.42 Z" fill="#7b9fcb"/><path d="M20.00 1.40 A18.6 18.6 0 0 1 30.93 4.95 L24.88 13.29 A8.3 8.3 0 0 0 20.00 11.70 Z" fill="#6b8cb8"/></svg>
<span style="position:absolute;top:255.08px;line-height:33px;font-size:26.60px;font-weight:normal;font-style:normal;color:#2a2a2a;white-space:pre;left:1533.40px;transform-origin:0 50%;transform:scaleX(1.0496);-webkit-text-stroke:0.35px #2a2a2a;">FlexiReporting</span>
<svg style="position:absolute;left:1461.00px;top:303.00px" width="18" height="18" viewBox="0 0 18 18"><circle cx="9" cy="5.300" r="3.900" fill="#4a6286"/><path d="M1.500 16.500v-2.500c0-3 2-4.800 4.300-5.200l3.200 1.800 3.200-1.800c2.300.4 4.300 2.200 4.300 5.200v2.500q-.2 1-1.500 1h-12q-1.300 0-1.500-1z" fill="#4a6286"/></svg>
<span style="position:absolute;top:304.15px;line-height:18px;font-size:14.00px;font-weight:bold;font-style:normal;color:#2a2a2a;white-space:pre;left:1492.00px;transform-origin:0 50%;transform:scaleX(0.9736);">Zalogowany jako: Administrator</span>
<svg style="position:absolute;left:1846.00px;top:257.00px" width="26" height="26" viewBox="0 0 26 26"><path d="M8.50 10.70 L9.03 10.81 L9.52 11.13 L9.93 11.57 L10.27 12.04 L10.58 12.43 L10.92 12.71 L11.33 12.86 L11.83 12.93 L12.40 13.00 L12.99 13.13 L13.50 13.40 L13.87 13.80 L14.04 14.32 L14.01 14.90 L13.83 15.47 L13.60 16.00 L13.41 16.47 L13.34 16.90 L13.41 17.33 L13.60 17.80 L13.83 18.33 L14.01 18.90 L14.04 19.48 L13.87 20.00 L13.50 20.40 L12.99 20.67 L12.40 20.80 L11.83 20.87 L11.33 20.94 L10.92 21.09 L10.58 21.37 L10.27 21.76 L9.93 22.23 L9.52 22.67 L9.03 22.99 L8.50 23.10 L7.97 22.99 L7.48 22.67 L7.07 22.23 L6.73 21.76 L6.42 21.37 L6.08 21.09 L5.67 20.94 L5.17 20.87 L4.60 20.80 L4.01 20.67 L3.50 20.40 L3.13 20.00 L2.96 19.48 L2.99 18.90 L3.17 18.33 L3.40 17.80 L3.59 17.33 L3.66 16.90 L3.59 16.47 L3.40 16.00 L3.17 15.47 L2.99 14.90 L2.96 14.32 L3.13 13.80 L3.50 13.40 L4.01 13.13 L4.60 13.00 L5.17 12.93 L5.67 12.86 L6.08 12.71 L6.42 12.43 L6.73 12.04 L7.07 11.57 L7.48 11.13 L7.97 10.81Z" fill="#fff" stroke="#3c6496" stroke-width="1.300" stroke-linejoin="round"/><circle cx="8.5" cy="16.9" r="1.700" fill="#dfeaf6" stroke="#3c6496" stroke-width="1.200"/><path d="M17.70 2.80 L18.23 2.91 L18.72 3.23 L19.13 3.67 L19.47 4.14 L19.78 4.53 L20.12 4.81 L20.53 4.96 L21.03 5.03 L21.60 5.10 L22.19 5.23 L22.70 5.50 L23.07 5.90 L23.24 6.42 L23.21 7.00 L23.03 7.57 L22.80 8.10 L22.61 8.57 L22.54 9.00 L22.61 9.43 L22.80 9.90 L23.03 10.43 L23.21 11.00 L23.24 11.58 L23.07 12.10 L22.70 12.50 L22.19 12.77 L21.60 12.90 L21.03 12.97 L20.53 13.04 L20.12 13.19 L19.78 13.47 L19.47 13.86 L19.13 14.33 L18.72 14.77 L18.23 15.09 L17.70 15.20 L17.17 15.09 L16.68 14.77 L16.27 14.33 L15.93 13.86 L15.62 13.47 L15.28 13.19 L14.87 13.04 L14.37 12.97 L13.80 12.90 L13.21 12.77 L12.70 12.50 L12.33 12.10 L12.16 11.58 L12.19 11.00 L12.37 10.43 L12.60 9.90 L12.79 9.43 L12.86 9.00 L12.79 8.57 L12.60 8.10 L12.37 7.57 L12.19 7.00 L12.16 6.42 L12.33 5.90 L12.70 5.50 L13.21 5.23 L13.80 5.10 L14.37 5.03 L14.87 4.96 L15.28 4.81 L15.62 4.53 L15.93 4.14 L16.27 3.67 L16.68 3.23 L17.17 2.91Z" fill="#c5dff5" stroke="#3c6496" stroke-width="1.300" stroke-linejoin="round"/><circle cx="17.7" cy="9" r="1.700" fill="#dfeaf6" stroke="#3c6496" stroke-width="1.200"/></svg>
<svg style="position:absolute;left:1881.00px;top:261.30px" width="20" height="20" viewBox="0 0 20 20"><path d="M6.200 4.500a6.100 6.100 0 1 0 7.800 0" fill="none" stroke="#c80000" stroke-width="2.300" stroke-linecap="round"/><path d="M10.100 2.300v7.300" stroke="#c80000" stroke-width="2.300" stroke-linecap="round"/></svg>
<div style="position:absolute;left:1454.00px;top:353.00px;width:458.00px;height:1.00px;background:#d9d9d9;"></div>
<div style="position:absolute;left:1533.00px;top:332.00px;width:74.00px;height:22.00px;background:#f0f0f0;border:1px solid #d9d9d9;box-sizing:border-box;"></div>
<div style="position:absolute;left:1606.00px;top:332.00px;width:102.00px;height:22.00px;background:#f0f0f0;border:1px solid #d9d9d9;box-sizing:border-box;"></div>
<div style="position:absolute;left:1707.00px;top:332.00px;width:81.00px;height:22.00px;background:#f0f0f0;border:1px solid #d9d9d9;box-sizing:border-box;"></div>
<div style="position:absolute;left:1454.00px;top:330.00px;width:80.00px;height:24.00px;background:#fff;border:1px solid #d9d9d9;box-sizing:border-box;border-bottom:none;"></div>
<span style="position:absolute;top:332.08px;line-height:18px;font-size:14.20px;font-weight:normal;font-style:normal;color:#1a1a1a;white-space:pre;left:1462.40px;transform-origin:0 50%;transform:scaleX(0.9617);">Nawigacja</span>
<span style="position:absolute;top:333.58px;line-height:18px;font-size:14.20px;font-weight:normal;font-style:normal;color:#1a1a1a;white-space:pre;left:1538.50px;transform-origin:0 50%;transform:scaleX(0.9352);">Obliczenia</span>
<span style="position:absolute;top:333.58px;line-height:18px;font-size:14.20px;font-weight:normal;font-style:normal;color:#1a1a1a;white-space:pre;left:1613.00px;transform-origin:0 50%;transform:scaleX(0.9891);">Źródła danych</span>
<span style="position:absolute;top:333.58px;line-height:18px;font-size:14.20px;font-weight:normal;font-style:normal;color:#1a1a1a;white-space:pre;left:1714.00px;transform-origin:0 50%;transform:scaleX(0.9639);">Mapowania</span>
<div style="position:absolute;left:1454.00px;top:354.00px;width:1.00px;height:595.00px;background:#d9d9d9;"></div>
<div style="position:absolute;left:1910.00px;top:354.00px;width:1.00px;height:595.00px;background:#d9d9d9;"></div>
<div style="position:absolute;left:1454.00px;top:948.00px;width:457.00px;height:1.00px;background:#d9d9d9;"></div>
<div style="position:absolute;left:1462.00px;top:359.00px;width:443.00px;height:582.00px;background:#fff;border:1px solid #000;box-sizing:border-box;"></div>
<div style="position:absolute;left:1904.00px;top:360.00px;width:1.00px;height:581.00px;background:#000;"></div>
<svg style="position:absolute;left:1465.30px;top:364.50px" width="17" height="14" viewBox="0 0 17 14"><rect x="0" y="12.4" width="2.400" height="1.6" fill="#3a3a3a"/><rect x="3.25" y="10.8" width="2.400" height="3.2" fill="#3a3a3a"/><rect x="6.5" y="8.4" width="2.400" height="5.6" fill="#3a3a3a"/><rect x="9.75" y="5.3" width="2.400" height="8.7" fill="#3a3a3a"/><rect x="13" y="0.7" width="2.400" height="13.3" fill="#3a3a3a"/></svg>
<span style="position:absolute;top:363.98px;line-height:18px;font-size:14.20px;font-weight:bold;font-style:normal;color:#1a1a1a;white-space:pre;left:1501.80px;transform-origin:0 50%;transform:scaleX(0.9791);">A. PLANOWANIE</span>
<svg style="position:absolute;left:1876.00px;top:365.70px" width="19" height="12" viewBox="0 0 19 12"><path d="M2 2.500l7.500 7 7.500-7" fill="none" stroke="#111" stroke-width="2.400"/></svg>
<svg style="position:absolute;left:1465.30px;top:388.50px" width="17" height="14" viewBox="0 0 17 14"><rect x="0" y="12.4" width="2.400" height="1.6" fill="#3a3a3a"/><rect x="3.25" y="10.8" width="2.400" height="3.2" fill="#3a3a3a"/><rect x="6.5" y="8.4" width="2.400" height="5.6" fill="#3a3a3a"/><rect x="9.75" y="5.3" width="2.400" height="8.7" fill="#3a3a3a"/><rect x="13" y="0.7" width="2.400" height="13.3" fill="#3a3a3a"/></svg>
<span style="position:absolute;top:387.98px;line-height:18px;font-size:14.20px;font-weight:bold;font-style:normal;color:#1a1a1a;white-space:pre;left:1501.80px;transform-origin:0 50%;transform:scaleX(0.9364);">B. RAPORTY</span>
<svg style="position:absolute;left:1876.00px;top:389.70px" width="19" height="12" viewBox="0 0 19 12"><path d="M2 9.500l7.500-7 7.500 7" fill="none" stroke="#111" stroke-width="2.400"/></svg>
<svg style="position:absolute;left:1470.70px;top:413.80px" width="18" height="14" viewBox="0 0 18 14"><rect x=".700" y=".700" width="15" height="11.600" rx="1.300" fill="#fff" stroke="#4a6a94" stroke-width="1.300"/><rect x=".700" y=".700" width="15" height="2.900" fill="#4a6a94"/><path d="M2.800 5.600h2.200M2.800 7.700h2.200M2.800 9.800h2.200" stroke="#9fb0c8" stroke-width="1.100"/><path d="M6 5.600h8M6 7.700h8M6 9.800h8" stroke="#8296b4" stroke-width="1.200"/></svg>
<span style="position:absolute;top:411.98px;line-height:18px;font-size:14.20px;font-weight:bold;font-style:normal;color:#1a1a1a;white-space:pre;left:1514.40px;transform-origin:0 50%;transform:scaleX(1.0043);">B.1. Raporty</span>
<svg style="position:absolute;left:1876.00px;top:413.70px" width="19" height="12" viewBox="0 0 19 12"><path d="M2 2.500l7.500 7 7.500-7" fill="none" stroke="#111" stroke-width="2.400"/></svg>
<svg style="position:absolute;left:1470.70px;top:437.80px" width="18" height="14" viewBox="0 0 18 14"><rect x=".700" y=".700" width="15" height="11.600" rx="1.300" fill="#fff" stroke="#4a6a94" stroke-width="1.300"/><rect x=".700" y=".700" width="15" height="2.900" fill="#4a6a94"/><path d="M2.800 5.600h2.200M2.800 7.700h2.200M2.800 9.800h2.200" stroke="#9fb0c8" stroke-width="1.100"/><path d="M6 5.600h8M6 7.700h8M6 9.800h8" stroke="#8296b4" stroke-width="1.200"/></svg>
<span style="position:absolute;top:435.98px;line-height:18px;font-size:14.20px;font-weight:bold;font-style:normal;color:#1a1a1a;white-space:pre;left:1514.40px;transform-origin:0 50%;transform:scaleX(0.9620);">B2. OLAP</span>
<svg style="position:absolute;left:1876.00px;top:437.70px" width="19" height="12" viewBox="0 0 19 12"><path d="M2 9.500l7.500-7 7.500 7" fill="none" stroke="#111" stroke-width="2.400"/></svg>
<div style="position:absolute;left:1463.00px;top:455.70px;width:440.50px;height:24.00px;background:#f4f4f4;"></div>
<svg style="position:absolute;left:1479.30px;top:459.10px" width="18" height="18" viewBox="0 0 18 18"><circle cx="7.800" cy="7.400" r="5.500" fill="none" stroke="#44608a" stroke-width="2.400"/><path d="M11.900 11.600l4.300 4.300" stroke="#44608a" stroke-width="2.800" stroke-linecap="round"/></svg>
<span style="position:absolute;top:460.29px;line-height:17px;font-size:13.60px;font-weight:normal;font-style:normal;color:#333;white-space:pre;left:1538.00px;transform-origin:0 50%;transform:scaleX(0.9810);">B2.1. Analiza odchyleń</span>
<svg style="position:absolute;left:1479.30px;top:483.10px" width="18" height="18" viewBox="0 0 18 18"><circle cx="7.800" cy="7.400" r="5.500" fill="none" stroke="#44608a" stroke-width="2.400"/><path d="M11.900 11.600l4.300 4.300" stroke="#44608a" stroke-width="2.800" stroke-linecap="round"/></svg>
<span style="position:absolute;top:484.29px;line-height:17px;font-size:13.60px;font-weight:normal;font-style:normal;color:#333;white-space:pre;left:1538.00px;transform-origin:0 50%;transform:scaleX(0.9702);">B2.2. Przegląd linii HR</span>
<div style="position:absolute;left:1463.00px;top:503.70px;width:440.50px;height:24.00px;background:#f4f4f4;"></div>
<svg style="position:absolute;left:1479.30px;top:507.10px" width="18" height="18" viewBox="0 0 18 18"><circle cx="7.800" cy="7.400" r="5.500" fill="none" stroke="#44608a" stroke-width="2.400"/><path d="M11.900 11.600l4.300 4.300" stroke="#44608a" stroke-width="2.800" stroke-linecap="round"/></svg>
<span style="position:absolute;top:508.29px;line-height:17px;font-size:13.60px;font-weight:normal;font-style:normal;color:#333;white-space:pre;left:1538.00px;transform-origin:0 50%;transform:scaleX(0.9903);">B2.3. Zestawienie 12M</span>
<svg style="position:absolute;left:1479.30px;top:531.10px" width="18" height="18" viewBox="0 0 18 18"><circle cx="7.800" cy="7.400" r="5.500" fill="none" stroke="#44608a" stroke-width="2.400"/><path d="M11.900 11.600l4.300 4.300" stroke="#44608a" stroke-width="2.800" stroke-linecap="round"/></svg>
<span style="position:absolute;top:532.29px;line-height:17px;font-size:13.60px;font-weight:normal;font-style:normal;color:#333;white-space:pre;left:1538.00px;transform-origin:0 50%;transform:scaleX(0.9904);">B2.4. Raport analityczny</span>
<svg style="position:absolute;left:1470.70px;top:557.80px" width="18" height="14" viewBox="0 0 18 14"><rect x=".700" y=".700" width="15" height="11.600" rx="1.300" fill="#fff" stroke="#4a6a94" stroke-width="1.300"/><rect x=".700" y=".700" width="15" height="2.900" fill="#4a6a94"/><path d="M2.800 5.600h2.200M2.800 7.700h2.200M2.800 9.800h2.200" stroke="#9fb0c8" stroke-width="1.100"/><path d="M6 5.600h8M6 7.700h8M6 9.800h8" stroke="#8296b4" stroke-width="1.200"/></svg>
<span style="position:absolute;top:555.98px;line-height:18px;font-size:14.20px;font-weight:bold;font-style:normal;color:#1a1a1a;white-space:pre;left:1514.40px;transform-origin:0 50%;transform:scaleX(0.9897);">B3. Dashboardy</span>
<svg style="position:absolute;left:1876.00px;top:557.70px" width="19" height="12" viewBox="0 0 19 12"><path d="M2 2.500l7.500 7 7.500-7" fill="none" stroke="#111" stroke-width="2.400"/></svg>
<svg style="position:absolute;left:1465.30px;top:580.50px" width="17" height="14" viewBox="0 0 17 14"><rect x="0" y="12.4" width="2.400" height="1.6" fill="#3a3a3a"/><rect x="3.25" y="10.8" width="2.400" height="3.2" fill="#3a3a3a"/><rect x="6.5" y="8.4" width="2.400" height="5.6" fill="#3a3a3a"/><rect x="9.75" y="5.3" width="2.400" height="8.7" fill="#3a3a3a"/><rect x="13" y="0.7" width="2.400" height="13.3" fill="#3a3a3a"/></svg>
<span style="position:absolute;top:579.98px;line-height:18px;font-size:14.20px;font-weight:bold;font-style:normal;color:#1a1a1a;white-space:pre;left:1501.80px;transform-origin:0 50%;transform:scaleX(0.9009);">C. SETUP</span>
<svg style="position:absolute;left:1876.00px;top:581.70px" width="19" height="12" viewBox="0 0 19 12"><path d="M2 2.500l7.500 7 7.500-7" fill="none" stroke="#111" stroke-width="2.400"/></svg>
<svg style="position:absolute;left:1631.00px;top:963.00px" width="20" height="18" viewBox="0 0 20 18"><path d="M0.700 9.200L7 7L9.800 9.500L6.500 11.700z" fill="#f2b632"/><path d="M13.200 1.700L19 3.300L9.800 9.500L19 14.500L14 16.700L4 10.300L7.700 7z" fill="#2c6cb5"/></svg>
<span style="position:absolute;top:964.50px;line-height:16px;font-size:13.00px;font-weight:bold;font-style:normal;color:#222;white-space:pre;left:1651.00px;transform-origin:0 50%;transform:scaleX(0.9342);">FlexiSolutions</span>
<span style="position:absolute;top:966.67px;line-height:16px;font-size:12.50px;font-weight:normal;font-style:normal;color:#444;white-space:pre;left:1850.00px;transform-origin:0 50%;transform:scaleX(0.9400);">1.5.15.23</span>
<div style="position:absolute;left:0.00px;top:974.00px;width:1446.00px;height:1.00px;background:#ababab;"></div>
<div style="position:absolute;left:0.00px;top:975.00px;width:1446.00px;height:28.00px;background:#e6e6e6;"></div>
<svg style="position:absolute;left:27.00px;top:981.00px" width="8" height="14" viewBox="0 0 8 14"><path d="M6.500 2L1.500 7l5 5z" fill="#c4c4c4"/></svg>
<svg style="position:absolute;left:56.00px;top:981.00px" width="8" height="14" viewBox="0 0 8 14"><path d="M1.500 2l5 5-5 5z" fill="#c4c4c4"/></svg>
<div style="position:absolute;left:103.00px;top:979.00px;width:1.00px;height:20.00px;background:#ababab;"></div>
<span style="position:absolute;top:975.46px;line-height:20px;font-size:16.00px;font-weight:normal;font-style:normal;color:#5a5a5a;white-space:pre;left:117.50px;transform-origin:0 50%;transform:scaleX(0.9949);">Arkusz1</span>
<div style="position:absolute;left:191.00px;top:975.00px;width:106.00px;height:24.00px;background:#fff;"></div>
<div style="position:absolute;left:191.00px;top:975.00px;width:1.00px;height:24.00px;background:#ababab;"></div>
<div style="position:absolute;left:296.00px;top:975.00px;width:1.00px;height:24.00px;background:#ababab;"></div>
<div style="position:absolute;left:191.00px;top:998.00px;width:106.00px;height:2.00px;background:#217346;"></div>
<span style="position:absolute;top:975.43px;line-height:19px;font-size:15.50px;font-weight:bold;font-style:normal;color:#217346;white-space:pre;left:203.50px;transform-origin:0 50%;transform:scaleX(0.9858);">OLAP_RPT</span>
<svg style="position:absolute;left:329.00px;top:978.00px" width="22" height="22" viewBox="0 0 22 22"><circle cx="11" cy="11" r="9" fill="none" stroke="#777" stroke-width="1.200"/><path d="M11 6v10M6 11h10" stroke="#777" stroke-width="1.600"/></svg>
<div style="position:absolute;left:864.50px;top:982.00px;width:3.00px;height:3.00px;background:#b9b9b9;"></div>
<div style="position:absolute;left:864.50px;top:987.00px;width:3.00px;height:3.00px;background:#b9b9b9;"></div>
<div style="position:absolute;left:864.50px;top:992.00px;width:3.00px;height:3.00px;background:#b9b9b9;"></div>
<div style="position:absolute;left:903.00px;top:980.00px;width:496.00px;height:17.00px;background:#f1f1f1;"></div>
<div style="position:absolute;left:883.00px;top:979.00px;width:20.00px;height:19.00px;background:#fff;border:1px solid #ababab;box-sizing:border-box;"></div>
<svg style="position:absolute;left:887.00px;top:983.00px" width="10" height="11" viewBox="0 0 10 11"><path d="M7.500 1L2.500 5.500l5 4.500z" fill="#222"/></svg>
<div style="position:absolute;left:902.00px;top:979.00px;width:418.00px;height:19.00px;background:#fff;border:1px solid #ababab;box-sizing:border-box;"></div>
<div style="position:absolute;left:1399.00px;top:979.00px;width:20.00px;height:19.00px;background:#fff;border:1px solid #ababab;box-sizing:border-box;"></div>
<svg style="position:absolute;left:1405.00px;top:983.00px" width="10" height="11" viewBox="0 0 10 11"><path d="M2.500 1l5 4.500-5 4.500z" fill="#222"/></svg>
<div style="position:absolute;left:0.00px;top:1003.00px;width:1920.00px;height:1.00px;background:#d2d2d2;"></div>
<div style="position:absolute;left:0.00px;top:1004.00px;width:1920.00px;height:18.00px;background:#f3f3f3;"></div>
<span style="position:absolute;top:1008.82px;line-height:17px;font-size:13.50px;font-weight:normal;font-style:normal;color:#333;white-space:pre;left:9.50px;transform-origin:0 50%;transform:scaleX(0.9505);">Gotowy</span>
<svg style="position:absolute;left:78.00px;top:1009.00px" width="16" height="14" viewBox="0 0 16 14"><circle cx="4" cy="4" r="3" fill="#555"/><rect x="5.500" y="2.500" width="9.500" height="12" fill="#fff" stroke="#555" stroke-width="1"/><path d="M7 6h7M7 9h1.500M9.500 9h1.500M12 9h1.500M7 12h1.500M9.500 12h1.500M12 12h1.500" stroke="#555" stroke-width="1.200"/></svg>
<svg style="position:absolute;left:117.00px;top:1008.00px" width="22" height="15" viewBox="0 0 22 15"><path d="M9.200 2.800A6.300 6.300 0 1 0 9.200 14.800" fill="none" stroke="#4a4a4a" stroke-width="1.400"/><path d="M8.300 2.200V7.200H15.800" fill="none" stroke="#4a4a4a" stroke-width="1.400"/><path d="M6.400 5.400l1.900 1.900 1.900-1.900M14.200 5.400l1.900 1.800-1.900 1.800" fill="none" stroke="#4a4a4a" stroke-width="1.300"/><path d="M9.700 10.500l3.300 2.600 5.600-3.600" fill="none" stroke="#4a4a4a" stroke-width="1.700"/></svg>
<span style="position:absolute;top:1009.12px;line-height:17px;font-size:13.50px;font-weight:normal;font-style:normal;color:#333;white-space:pre;left:140.00px;transform-origin:0 50%;transform:scaleX(0.9730);">Ułatwienia dostępu: zbadaj</span>
<svg style="position:absolute;left:1366.00px;top:1008.00px" width="20" height="15" viewBox="0 0 20 15"><rect x="0" y="1" width="19" height="14" rx="1.500" fill="#555"/><circle cx="12.500" cy="12.500" r="3.300" fill="#f3f3f3" stroke="#555" stroke-width="1.200"/></svg>
<span style="position:absolute;top:1009.12px;line-height:17px;font-size:13.50px;font-weight:normal;font-style:normal;color:#333;white-space:pre;left:1387.40px;transform-origin:0 50%;transform:scaleX(0.9343);">Ustawienia wyświetlania</span>
<div style="position:absolute;left:1548.50px;top:1004.00px;width:49.50px;height:18.00px;background:#c6c6c6;"></div>
<svg style="position:absolute;left:1564.00px;top:1009.00px" width="18" height="14" viewBox="0 0 18 14"><rect x=".600" y=".600" width="16" height="16" fill="none" stroke="#666" stroke-width="1.200"/><path d="M6 .6v16M11.500 .6v16M.600 5.500h16M.600 10.500h16" stroke="#666" stroke-width="1.200"/></svg>
<svg style="position:absolute;left:1613.00px;top:1009.00px" width="18" height="14" viewBox="0 0 18 14"><rect x=".600" y=".600" width="15.500" height="16" fill="none" stroke="#666" stroke-width="1.200"/><rect x="4" y="4" width="8.500" height="10" fill="none" stroke="#666" stroke-width="1"/><path d="M5.500 6.500h5.500M5.500 9h5.500M5.500 11.500h5.500" stroke="#666" stroke-width=".9"/></svg>
<svg style="position:absolute;left:1662.00px;top:1009.00px" width="18" height="14" viewBox="0 0 18 14"><path d="M.600 14V.6h15.500V14" fill="none" stroke="#666" stroke-width="1.200"/><path d="M5.500 .6v9M.600 9.500h10.500V.6" fill="none" stroke="#666" stroke-width="1.200"/></svg>
<div style="position:absolute;left:1705.00px;top:1017.00px;width:10.00px;height:1.30px;background:#555;"></div>
<div style="position:absolute;left:1721.00px;top:1017.00px;width:125.00px;height:1.00px;background:#777;"></div>
<div style="position:absolute;left:1775.00px;top:1010.00px;width:5.00px;height:13.00px;background:#444;"></div>
<div style="position:absolute;left:1783.00px;top:1013.00px;width:1.00px;height:8.00px;background:#444;"></div>
<div style="position:absolute;left:1852.00px;top:1017.00px;width:10.00px;height:1.30px;background:#555;"></div>
<div style="position:absolute;left:1856.40px;top:1012.50px;width:1.30px;height:10.00px;background:#555;"></div>
<span style="position:absolute;top:1009.52px;line-height:17px;font-size:13.50px;font-weight:normal;font-style:normal;color:#333;white-space:pre;left:1878.00px;transform-origin:0 50%;transform:scaleX(0.8882);">90%</span>
</body></html>
